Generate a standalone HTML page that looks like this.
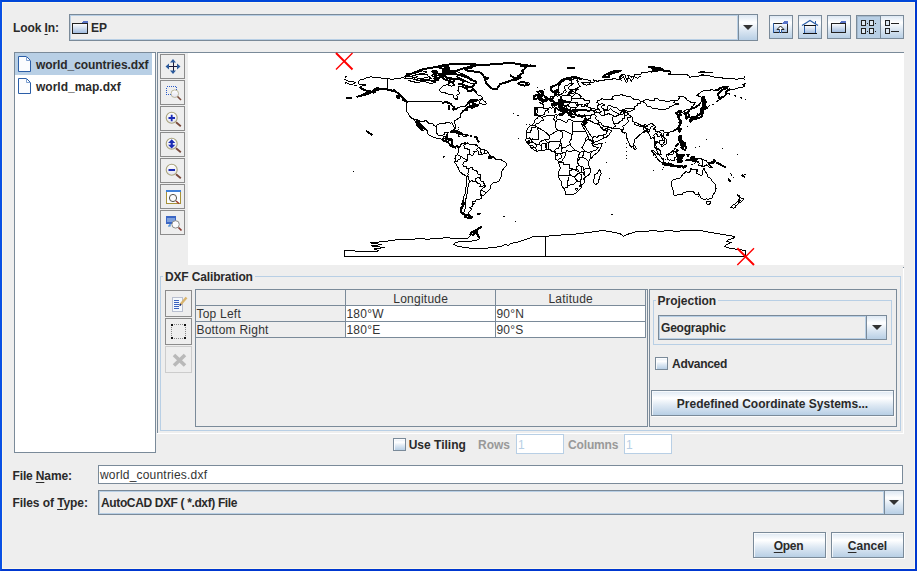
<!DOCTYPE html>
<html>
<head>
<meta charset="utf-8">
<title>Open DXF</title>
<style>
*{box-sizing:border-box;margin:0;padding:0}
html,body{width:917px;height:571px;overflow:hidden;background:#eee}
body{position:relative;font-family:"Liberation Sans",sans-serif;font-size:12px;color:#333;line-height:14px}
.a{position:absolute}
.b{font-weight:bold}
.frame{left:0;top:0;width:917px;height:571px;border:2px solid #0038d0;border-top-color:#0046d8;border-left-color:#0a50e4}
.frame2{left:2px;top:2px;width:913px;height:567px;border:1px solid #fbf8e8}
.lbl{white-space:nowrap;font-weight:bold;color:#2a2a2a}
.dis{color:#999}
.bd{border:1px solid #7a8a99}
.btn{border:1px solid #7a8a99;background:linear-gradient(#dde8f3 0%,#fff 30%,#dde8f3 60%,#b8cfe5 100%);box-shadow:1px 1px 0 #fbfbfb,inset 1px 1px 0 rgba(255,255,255,.75)}
.tbtn{border:1px solid #7a8a99;background:linear-gradient(#dde8f3 0%,#fff 30%,#dde8f3 60%,#b8cfe5 100%)}
.combo{border:1px solid #7a8a99;background:#eee}
.cin{border:1px solid #b8cfe5}
.arrow{border-left:1px solid #7a8a99;background:linear-gradient(#dde8f3 0%,#fff 30%,#dde8f3 60%,#b8cfe5 100%)}
.tri{width:0;height:0;border-left:5px solid transparent;border-right:5px solid transparent;border-top:5px solid #333}
.chk{width:13px;height:13px;border:1px solid #7a8a99;background:linear-gradient(#e6eef7 0%,#fff 30%,#dde8f3 60%,#b8cfe5 100%);box-shadow:inset 1px 1px 0 rgba(255,255,255,.8)}
.tool{width:25px;height:25px;border:1px solid #8c8c8c;background:#eee;left:160px}
.cell{letter-spacing:.24px;height:16px;line-height:17px;white-space:nowrap;font-weight:normal;color:#333;padding-left:.4px}
u{text-decoration:underline;text-decoration-thickness:1px;text-underline-offset:2px}
</style>
</head>
<body>
<div class="a frame"></div>
<div class="a frame2"></div>

<!-- Look In row -->
<div class="a lbl" style="left:13px;top:21px;letter-spacing:-.1px">Look <u>I</u>n:</div>
<div class="a combo" style="left:69px;top:14px;width:689px;height:27px"></div>
<div class="a cin" style="left:70px;top:15px;width:668px;height:25px"></div>
<div class="a lbl" style="left:91px;top:21px">EP</div>
<div class="a arrow" style="left:738px;top:15px;width:19px;height:25px"></div>
<div class="a tri" style="left:743px;top:25px"></div>

<div class="a tbtn" id="b1" style="left:769px;top:15px;width:24px;height:24px"></div>
<div class="a tbtn" id="b2" style="left:798px;top:15px;width:24px;height:24px"></div>
<div class="a tbtn" id="b3" style="left:827px;top:15px;width:24px;height:24px"></div>
<div class="a tbtn" id="b4" style="left:856px;top:15px;width:25px;height:24px;background:#b8cfe5;box-shadow:inset 1px 1px 0 #a3b8cc"></div>
<div class="a tbtn" id="b5" style="left:880px;top:15px;width:24px;height:24px"></div>

<!-- File list -->
<div class="a bd" style="left:14px;top:52px;width:142px;height:401px;background:#fff"></div>
<div class="a" style="left:15px;top:53px;width:137px;height:22px;background:#b8cfe5"></div>
<div class="a lbl" style="left:36px;top:58px;letter-spacing:-.08px">world_countries.dxf</div>
<div class="a lbl" style="left:36px;top:80px">world_map.dxf</div>

<!-- Preview pane -->
<div class="a" style="left:157px;top:52px;width:747px;height:1px;background:#7a8a99"></div>
<div class="a" style="left:157px;top:52px;width:1px;height:381px;background:#7a8a99"></div>
<div class="a" style="left:188px;top:53px;width:716px;height:212px;background:#fff"></div>
<div class="a" style="left:157px;top:433px;width:747px;height:1px;background:#fff"></div>
<div class="a" style="left:903px;top:268px;width:1px;height:165px;background:#fff"></div>
<div class="a" style="left:903px;top:267px;width:1px;height:1px;background:#7a8a99"></div>

<div class="a tool" style="top:54px"></div>
<div class="a tool" style="top:80px"></div>
<div class="a tool" style="top:106px"></div>
<div class="a tool" style="top:132px"></div>
<div class="a tool" style="top:158px"></div>
<div class="a tool" style="top:184px"></div>
<div class="a tool" style="top:210px"></div>

<!-- DXF Calibration -->
<div class="a" style="left:160px;top:276px;width:741px;height:155px;border:1px solid #b8cfe5"></div>
<div class="a lbl" style="left:163px;top:270px;background:#eee;padding:0 2px;letter-spacing:-.15px">DXF Calibration</div>

<div class="a tool" style="left:165px;top:290px;width:27px;height:27px"></div>
<div class="a tool" style="left:165px;top:318px;width:27px;height:27px"></div>
<div class="a tool" style="left:165px;top:346px;width:27px;height:27px;border-color:#ccc"></div>

<div class="a bd" style="left:195px;top:289px;width:453px;height:138px"></div>
<div class="a" id="tbl" style="left:196px;top:290px;width:451px;height:48px">
<div class="a" style="left:0;top:0;width:450px;height:48px;background:linear-gradient(#eee,#eee)"></div>
<div class="a" style="left:150px;top:16px;width:300px;height:32px;background:#fff"></div>
<div class="a" style="left:0;top:15px;width:450px;height:1px;background:#7a8a99"></div>
<div class="a" style="left:0;top:31px;width:450px;height:1px;background:#7a8a99"></div>
<div class="a" style="left:0;top:47px;width:450px;height:1px;background:#7a8a99"></div>
<div class="a" style="left:149px;top:0;width:1px;height:48px;background:#7a8a99"></div>
<div class="a" style="left:299px;top:0;width:1px;height:48px;background:#7a8a99"></div>
<div class="a" style="left:449px;top:0;width:1px;height:48px;background:#7a8a99"></div>
<div class="a cell" style="left:150px;top:1px;width:149px;text-align:center">Longitude</div>
<div class="a cell" style="left:300px;top:1px;width:149px;text-align:center">Latitude</div>
<div class="a cell" style="left:0;top:16px">Top Left</div>
<div class="a cell" style="left:150px;top:16px">180°W</div>
<div class="a cell" style="left:300px;top:16px">90°N</div>
<div class="a cell" style="left:0;top:32px">Bottom Right</div>
<div class="a cell" style="left:150px;top:32px">180°E</div>
<div class="a cell" style="left:300px;top:32px">90°S</div>
</div>

<!-- Projection -->
<div class="a bd" style="left:649px;top:289px;width:248px;height:138px"></div>
<div class="a" style="left:653px;top:300px;width:239px;height:45px;border:1px solid #b8cfe5"></div>
<div class="a lbl" style="left:655.5px;top:294px;background:#eee;padding:0 2px">Projection</div>
<div class="a combo" style="left:658px;top:315px;width:229px;height:25px"></div>
<div class="a cin" style="left:659px;top:316px;width:207px;height:23px"></div>
<div class="a lbl" style="left:661px;top:321px;letter-spacing:-.2px">Geographic</div>
<div class="a arrow" style="left:866px;top:316px;width:20px;height:23px"></div>
<div class="a tri" style="left:872px;top:325px"></div>
<div class="a chk" style="left:655px;top:357px"></div>
<div class="a lbl" style="left:672px;top:357px;letter-spacing:-.29px">Advanced</div>
<div class="a btn" style="left:651px;top:390px;width:243px;height:26px"></div>
<div class="a lbl" style="left:651px;top:397px;width:243px;text-align:center">Predefined Coordinate Systems...</div>

<!-- Tiling row -->
<div class="a chk" style="left:393px;top:438px"></div>
<div class="a lbl" style="left:408.7px;top:438px">Use Tiling</div>
<div class="a lbl dis" style="left:478px;top:438px">Rows</div>
<div class="a" style="left:516px;top:434px;width:48px;height:20px;background:#fff;border:1px solid #b8cfe5"></div>
<div class="a" style="left:518px;top:438px;color:#b8cfe5">1</div>
<div class="a lbl dis" style="left:568px;top:438px;letter-spacing:-.15px">Columns</div>
<div class="a" style="left:624px;top:434px;width:48px;height:20px;background:#fff;border:1px solid #b8cfe5"></div>
<div class="a" style="left:626px;top:438px;color:#b8cfe5">1</div>

<!-- File name / type -->
<div class="a lbl" style="left:12.5px;top:469px;letter-spacing:-.14px">File <u>N</u>ame:</div>
<div class="a bd" style="left:98px;top:465px;width:805px;height:19px;background:#fff"></div>
<div class="a" style="left:100px;top:468px;white-space:nowrap;letter-spacing:.2px">world_countries.dxf</div>
<div class="a lbl" style="left:12.5px;top:496px;letter-spacing:-.08px">Files of <u>T</u>ype:</div>
<div class="a combo" style="left:98px;top:490px;width:806px;height:25px"></div>
<div class="a cin" style="left:99px;top:491px;width:785px;height:23px"></div>
<div class="a lbl" style="left:101px;top:496px;letter-spacing:-.37px">AutoCAD DXF ( *.dxf) File</div>
<div class="a arrow" style="left:884px;top:491px;width:19px;height:23px"></div>
<div class="a tri" style="left:889px;top:500px"></div>

<!-- Buttons -->
<div class="a btn" style="left:753px;top:532px;width:73px;height:26px"></div>
<div class="a lbl" style="left:752px;top:539px;width:73px;text-align:center;letter-spacing:-.3px"><u>O</u>pen</div>
<div class="a btn" style="left:831px;top:532px;width:73px;height:26px"></div>
<div class="a lbl" style="left:831px;top:539px;width:73px;text-align:center"><u>C</u>ancel</div>

<!-- Map + icons SVG overlay -->
<svg class="a" id="ov" style="left:0;top:0" width="917" height="571" viewBox="0 0 917 571">

<defs>
<linearGradient id="fg" x1="0" y1="0" x2="0" y2="1"><stop offset="0" stop-color="#fff"/><stop offset="1" stop-color="#9db9de"/></linearGradient>
<linearGradient id="lens" x1="0" y1="0" x2="0" y2="1"><stop offset="0" stop-color="#fff"/><stop offset="1" stop-color="#e4e4ee"/></linearGradient>
</defs>
<g id="icons" shape-rendering="crispEdges">
<!-- combo folder -->
<rect x="72.5" y="23.5" width="15" height="10" fill="url(#fg)" stroke="#222"/>
<path d="M81 23 L83 21 H88 V23 Z" fill="#5873c9"/>
<!-- file icons -->
<path d="M18.5 56.5 H26.5 L30.5 60.5 V71.5 H18.5 Z" fill="#fbfcfe" stroke="#2b5ea7" shape-rendering="auto"/>
<path d="M26.5 56.5 V60.5 H30.5" fill="none" stroke="#7d9fd0" shape-rendering="auto"/>
<path d="M18.5 78.5 H26.5 L30.5 82.5 V93.5 H18.5 Z" fill="#fbfcfe" stroke="#2b5ea7" shape-rendering="auto"/>
<path d="M26.5 78.5 V82.5 H30.5" fill="none" stroke="#7d9fd0" shape-rendering="auto"/>
<!-- up folder -->
<rect x="773.5" y="23.5" width="14" height="9" fill="url(#fg)" stroke="#222"/>
<path d="M773.5 23 V33" stroke="#2b5ea7"/>
<path d="M782 23 L784 21 H788 V24 H782 Z" fill="#5873c9"/>
<path d="M780.5 26 L777 29.5 H779.5 V32.5 H781.5 V29.5 H784 Z" fill="#fff" stroke="#222" shape-rendering="auto" stroke-width="1"/>
<path d="M779.5 30 V32.5 M781.5 30 V32.5" stroke="#2b5ea7"/>
<!-- home -->
<path d="M802 25.5 L810 20.5 L818 25.5" fill="none" stroke="#2b5ea7" shape-rendering="auto" stroke-width="1.2"/>
<path d="M815.5 21 V24" stroke="#2b5ea7" stroke-width="1.5"/>
<rect x="804.5" y="25.5" width="11" height="8" fill="url(#fg)" stroke="#2b5ea7"/>
<path d="M804 25.5 H816 M803 33.5 H817" stroke="#111"/>
<!-- new folder -->
<rect x="831.5" y="23.5" width="14" height="9" fill="url(#fg)" stroke="#222"/>
<path d="M839 23 L841 21 H846 V23 Z" fill="#5873c9"/>
<!-- list view -->
<g fill="#dde8f3" stroke="#222">
<rect x="861.5" y="20.5" width="4" height="5"/><rect x="869.5" y="20.5" width="4" height="5"/>
<rect x="861.5" y="28.5" width="4" height="5"/><rect x="869.5" y="28.5" width="4" height="5"/>
<rect x="885.5" y="20.5" width="4" height="5"/><rect x="885.5" y="28.5" width="4" height="5"/>
</g>
<g fill="#222"><rect x="867" y="23" width="1" height="1"/><rect x="875" y="23" width="1" height="1"/><rect x="867" y="31" width="1" height="1"/><rect x="875" y="31" width="1" height="1"/>
<rect x="891" y="23" width="8" height="1"/><rect x="891" y="31" width="8" height="1"/></g>
</g>
<g id="tools">
<!-- move -->
<path d="M173 60 V73 M166.5 66.5 H179.5" stroke="#1a1a3a" stroke-width="1" shape-rendering="crispEdges"/>
<path d="M173 59 L176 62.5 H170 Z M173 74 L176 70.5 H170 Z M165.5 66.5 L169 63.5 V69.5 Z M180.5 66.5 L177 63.5 V69.5 Z" fill="#2b5a9c"/>
<!-- zoom box -->
<rect x="166.5" y="86.5" width="10" height="8" fill="none" stroke="#2a5ac8" stroke-dasharray="1 1" shape-rendering="crispEdges"/>
<circle cx="174.8" cy="93.7" r="3.8" fill="url(#lens)" stroke="#bdb9a0" stroke-width="1"/>
<path d="M177.5 96.5 L181 100" stroke="#7a4a3c" stroke-width="1.6"/>
<!-- zoom in -->
<circle cx="171.7" cy="117.8" r="5.5" fill="url(#lens)" stroke="#aaa47e" stroke-width="1.1"/>
<path d="M168.5 118 H175 M171.7 114.8 V121.2" stroke="#1c2cb4" stroke-width="1.8"/>
<path d="M176 122.3 L180.8 126.3" stroke="#7a4a3c" stroke-width="1.8"/>
<!-- zoom both -->
<circle cx="171.7" cy="143.8" r="5.5" fill="url(#lens)" stroke="#aaa47e" stroke-width="1.1"/>
<path d="M171.7 139.2 L175.3 143 H172.8 V144.8 H175.3 L171.7 148.6 L168.1 144.8 H170.6 V143 H168.1 Z" fill="#1c2cb4"/>
<path d="M176 148.3 L180.8 152.3" stroke="#7a4a3c" stroke-width="1.8"/>
<!-- zoom out -->
<circle cx="171.7" cy="169.8" r="5.5" fill="url(#lens)" stroke="#aaa47e" stroke-width="1.1"/>
<path d="M168.5 170 H175" stroke="#1c2cb4" stroke-width="2"/>
<path d="M176 174.3 L180.8 178.3" stroke="#7a4a3c" stroke-width="1.8"/>
<!-- zoom window -->
<rect x="166.5" y="190.5" width="14" height="13" fill="#fbfdff" stroke="#a89238" shape-rendering="crispEdges"/>
<rect x="166" y="190" width="15" height="2" fill="#3f80d8" shape-rendering="crispEdges"/>
<circle cx="173" cy="198" r="3.6" fill="#fafafa" stroke="#55524a" stroke-width="1"/>
<path d="M176 201 L179 203.5" stroke="#a03828" stroke-width="1.5"/>
<!-- zoom screen -->
<rect x="166" y="216" width="10" height="8" fill="#3b66c4" shape-rendering="crispEdges"/>
<rect x="167" y="218" width="8" height="4" fill="#7d9fdc" shape-rendering="crispEdges"/>
<path d="M170 224 V226 H168 " stroke="#2f7bd0" stroke-width="1.2" fill="none"/>
<circle cx="175.6" cy="224.4" r="3.7" fill="#fbfbfd" stroke="#8c8c88" stroke-width="1"/>
<path d="M178.5 227.5 L181.5 230.5" stroke="#8a3a30" stroke-width="1.7"/>
<!-- edit -->
<rect x="172.5" y="297.5" width="10" height="14" fill="#f4f8fc" stroke="#b9bfd0" shape-rendering="crispEdges"/>
<path d="M174 300.5 H179 M174 302.5 H179 M174 304.5 H179 M174 306.5 H179 M174 308.5 H179" stroke="#3b62c0" shape-rendering="crispEdges"/>
<path d="M186.5 297.5 L180.5 304.5" stroke="#d9b36c" stroke-width="2.4"/>
<path d="M180.8 304 L179.8 305.6" stroke="#1a2a6a" stroke-width="1.6"/>
<!-- select -->
<g fill="#111" shape-rendering="crispEdges"><rect x="171" y="324" width="2" height="2"/><rect x="184" y="324" width="2" height="2"/><rect x="171" y="337" width="2" height="2"/><rect x="184" y="337" width="2" height="2"/></g>
<path d="M174 324.5 H184 M174 338.5 H184 M171.5 327 V337 M185.5 327 V337" stroke="#888" stroke-dasharray="1 1" shape-rendering="crispEdges"/>
<!-- delete disabled -->
<path d="M174 355 L185 365.5 M185 355 L174 365.5" stroke="#b9b9b9" stroke-width="3.6" stroke-linecap="butt"/>
</g>
<!--MAP--><g id="map" fill="none" stroke="#000" shape-rendering="crispEdges" stroke-linejoin="round"><path stroke-width="1" d="M465.1,134.3 465.1,136.2 M387.9,78.7 387.9,89.1 390.2,89.4 391.8,90.5 394.1,89.8 395.7,90.8 398.0,92.8 400.2,93.9 400.2,95.0 M408.2,101.7 439.0,101.7 439.4,101.2 442.5,102.2 445.3,102.8 446.4,102.5 450.9,104.5 452.0,105.0 453.1,105.8 453.2,108.4 452.6,109.2 453.1,109.8 457.0,108.6 457.0,108.0 459.8,107.2 461.5,106.1 465.4,106.1 466.5,105.6 467.0,104.5 467.9,103.5 469.3,103.6 469.5,105.2 470.4,106.1 M414.6,120.1 417.2,119.8 421.4,121.4 424.5,121.4 424.5,120.8 426.4,120.8 428.6,123.2 430.3,124.0 430.8,123.1 432.5,123.4 434.2,125.6 436.6,127.3 M442.3,140.1 442.3,139.2 442.9,138.3 444.3,138.3 443.2,137.1 443.6,136.4 445.7,136.4 445.7,138.5 446.0,138.5 M445.7,136.4 446.7,135.7 M446.8,138.8 445.5,140.2 444.6,140.9 M445.5,140.2 447.0,140.8 447.2,141.3 M447.8,141.8 448.4,140.9 450.3,140.1 452.3,139.6 M449.6,143.9 451.4,144.2 451.8,144.1 M452.7,147.2 453.0,145.6 M468.6,214.9 468.6,217.4 M443.3,156.6 443.9,157.3 M444.2,156.8 444.6,157.0 M465.6,143.1 464.3,144.0 463.7,145.7 464.4,146.9 464.8,148.2 467.0,148.5 467.7,149.5 469.8,149.4 469.5,151.2 470.0,152.4 469.5,153.1 470.5,154.9 M470.5,154.9 469.8,154.0 467.3,154.4 467.3,155.0 467.8,155.1 467.6,156.8 467.0,156.5 467.1,160.9 M467.1,160.9 466.3,160.5 467.0,159.3 464.3,158.9 462.6,157.4 461.2,156.4 M461.2,156.4 459.8,155.9 458.7,155.5 457.2,154.6 M461.2,156.4 460.9,157.9 459.8,159.2 458.1,159.8 457.6,161.3 456.5,161.8 455.6,161.1 455.6,160.0 M467.1,160.9 463.9,161.9 462.8,164.3 463.9,166.5 466.5,166.8 466.4,168.5 467.5,168.5 M467.5,168.5 468.5,170.2 468.2,172.4 467.7,173.5 468.2,174.3 467.6,175.8 466.6,176.8 M467.6,175.8 468.7,178.0 469.0,180.2 470.2,181.7 M467.5,168.5 469.3,168.2 472.3,167.2 472.3,169.3 474.8,170.3 477.6,171.5 478.0,174.3 480.1,174.4 480.7,176.3 480.6,177.6 480.2,178.7 M480.2,178.7 479.3,177.8 476.3,178.1 475.6,179.1 475.3,181.0 473.4,181.7 472.4,180.9 471.2,180.5 470.2,181.7 M470.2,181.7 468.8,183.6 468.7,185.8 467.4,188.0 467.0,190.8 467.0,193.6 466.5,196.4 465.9,199.1 465.1,201.9 465.1,205.3 465.4,208.1 464.3,210.8 463.7,212.5 464.8,214.2 468.8,214.5 M475.3,181.0 477.1,182.8 480.9,184.4 479.7,186.7 482.6,186.7 484.2,184.8 M480.2,178.7 480.5,180.9 483.0,181.2 483.3,183.0 484.5,183.1 484.2,184.8 M484.2,184.8 485.1,185.4 485.2,186.6 482.9,187.9 480.9,189.9 480.2,192.5 480.0,194.0 M480.9,189.9 482.6,190.7 484.9,191.8 485.8,192.7 485.5,193.8 M470.5,154.9 472.1,155.4 473.7,154.4 473.7,153.5 474.8,152.0 473.2,151.7 475.1,152.0 477.1,151.2 477.4,150.5 M477.4,150.5 476.7,149.6 477.8,148.5 478.4,147.0 M477.4,150.5 478.2,151.2 478.6,151.9 478.3,153.6 479.3,154.8 480.4,154.6 482.1,154.1 M482.1,154.1 480.4,151.8 481.3,149.6 M482.1,154.1 484.2,153.7 484.9,153.8 M484.9,153.8 484.4,151.8 484.9,149.8 M484.9,153.8 486.5,153.8 487.5,151.6 M536.1,95.5 536.9,96.0 538.0,96.0 M541.5,90.5 541.9,90.3 M571.2,113.0 572.3,113.8 M576.2,115.7 576.0,116.3 M574.0,112.6 574.5,112.8 M579.3,78.5 577.3,79.4 M577.3,79.4 576.2,78.3 574.0,78.6 573.4,79.4 568.4,79.2 567.9,79.4 M567.9,79.4 565.1,80.0 563.4,81.1 561.2,82.7 560.6,84.4 558.6,85.5 558.6,87.7 558.9,88.9 558.1,89.8 557.5,90.5 M567.9,79.4 571.2,80.7 571.8,82.2 572.0,83.0 M577.3,79.4 576.8,80.3 578.4,81.1 577.3,81.8 578.4,83.3 578.1,84.4 580.1,86.3 577.3,88.1 576.0,88.9 M576.2,90.1 575.5,91.1 575.7,92.2 M572.1,91.9 574.0,92.0 575.7,92.2 M575.7,92.2 576.4,93.7 574.7,94.2 M568.5,93.9 571.8,93.5 574.7,94.2 M574.7,94.2 573.6,95.9 571.2,96.2 M568.4,94.7 570.4,95.1 570.4,95.7 M567.0,95.7 570.4,95.7 571.2,96.2 M571.2,96.2 571.6,97.6 571.3,98.9 M571.3,98.9 571.8,100.0 570.3,101.5 570.1,101.6 M570.1,101.6 567.3,101.3 566.0,101.1 M566.0,101.1 564.0,100.2 562.8,99.9 561.5,99.6 M561.5,99.6 561.4,98.3 560.8,97.2 561.0,96.2 M561.5,99.6 559.5,100.1 558.6,100.3 559.3,101.3 560.4,102.1 M560.4,102.1 559.5,103.3 556.7,103.3 555.7,103.3 M560.4,102.1 561.7,101.7 563.8,102.1 M563.8,102.1 565.3,101.3 566.0,101.1 M563.8,102.1 564.1,102.8 566.0,103.0 567.3,102.6 569.8,102.3 M569.8,102.3 570.1,101.6 M564.1,102.8 563.4,103.9 563.0,104.0 M563.0,104.0 563.4,104.5 564.5,105.1 566.1,105.1 M566.1,105.1 567.6,104.9 M567.6,104.9 569.0,103.9 570.5,102.8 M569.8,102.3 570.5,102.8 M570.5,102.8 572.3,102.9 574.7,102.5 M574.7,102.5 576.3,104.5 576.4,105.6 M574.7,102.5 577.3,102.8 578.4,104.5 576.4,105.6 M576.4,105.6 578.0,105.9 M576.9,107.6 575.1,107.1 570.3,107.0 M570.3,107.0 568.9,106.4 567.6,104.9 M570.3,107.0 570.0,108.4 570.0,109.1 M570.0,109.1 570.6,110.3 M570.6,110.3 572.3,110.0 574.3,109.8 M574.3,109.8 576.2,109.5 M574.3,109.8 574.0,110.7 M570.6,110.3 568.4,110.7 M568.4,110.7 567.3,112.0 M568.4,110.7 567.9,109.6 M567.9,109.6 567.3,108.8 566.6,109.6 M567.9,109.6 570.0,109.1 M566.2,106.2 566.6,107.0 566.4,107.8 565.6,108.9 M562.6,105.9 563.4,105.9 566.2,106.2 M562.6,105.9 563.1,107.0 564.6,108.4 565.6,108.9 M566.2,106.2 566.1,105.1 M560.2,105.6 562.1,105.6 563.4,104.5 M560.3,104.5 563.0,104.0 M560.3,104.5 560.2,105.4 M560.3,104.5 558.6,103.9 556.7,104.0 M556.7,104.0 556.2,104.7 555.0,105.0 554.4,104.6 552.8,105.1 M556.7,104.0 555.7,103.3 M555.7,103.3 554.5,103.1 553.5,103.2 M553.5,103.2 552.6,103.6 551.7,104.7 552.8,105.1 M552.8,105.1 552.5,106.1 553.4,107.5 M553.5,103.2 554.2,101.7 552.1,101.1 M552.1,101.1 551.5,101.1 550.4,100.6 549.7,100.7 548.4,99.8 547.8,99.3 M552.1,101.1 551.8,100.4 551.5,101.1 M551.8,100.4 551.7,99.7 M551.7,99.7 551.4,99.2 549.8,99.0 548.8,99.0 M551.7,99.7 551.8,98.6 552.8,98.0 552.8,96.8 M554.7,95.1 555.6,95.2 M535.2,109.6 537.8,109.7 537.4,110.6 537.2,112.0 536.9,113.4 536.8,114.8 M543.1,107.9 545.8,108.7 548.6,109.0 M571.3,98.9 575.1,98.8 579.0,99.0 580.4,98.2 M576.4,93.7 579.3,94.3 579.6,95.3 581.2,96.5 580.4,98.2 M580.4,98.2 582.9,98.0 584.6,100.1 587.4,100.7 589.6,101.0 589.4,102.8 587.6,103.8 M589.6,107.9 592.9,108.1 596.8,109.7 M596.8,109.7 599.0,109.7 M591.4,110.0 593.5,110.5 M593.5,110.5 595.2,110.3 M595.2,110.3 596.8,109.7 M593.5,110.5 593.7,111.6 594.9,112.0 M595.2,110.3 596.3,111.5 596.8,112.9 M594.9,112.0 596.8,112.9 M594.9,112.0 594.4,113.9 594.9,114.8 M527.5,125.1 527.9,125.0 M588.8,162.9 589.0,163.4 M554.6,152.1 554.8,152.6 M573.1,121.1 572.9,123.7 572.9,131.8 M572.9,131.8 586.1,131.8 M572.9,131.8 572.9,134.0 571.8,134.0 571.8,134.5 M571.8,134.5 562.8,130.1 561.7,130.6 M561.7,130.6 560.8,131.1 558.4,130.1 M558.4,130.1 556.2,129.0 555.6,126.7 555.9,124.5 555.6,122.6 M555.6,122.6 556.5,120.9 557.8,119.3 M555.6,122.6 555.0,120.6 553.4,118.9 554.3,117.3 554.6,115.2 M542.6,117.2 543.1,118.9 543.6,120.4 541.1,120.9 539.5,122.8 535.3,124.3 535.3,125.8 M530.3,125.4 535.3,125.4 M535.3,125.8 535.3,127.3 531.7,127.3 531.7,130.1 530.5,130.6 530.5,132.5 526.1,132.4 M535.3,125.8 539.7,128.4 M539.7,128.4 546.4,132.8 548.7,135.1 549.7,135.0 M549.7,135.0 551.7,134.2 558.4,130.1 M539.7,128.4 537.8,128.4 538.9,139.0 534.7,139.0 532.9,139.4 532.2,138.9 531.4,139.8 M549.7,135.0 549.7,137.9 548.9,139.1 546.1,139.6 545.2,139.6 M545.2,139.6 542.8,140.4 540.6,141.4 539.1,143.2 538.9,144.7 M538.9,144.7 536.1,144.9 M536.1,144.9 535.6,143.4 533.3,142.9 532.3,142.4 M532.3,142.4 531.4,139.8 M531.4,139.8 529.4,137.9 526.6,138.4 M532.3,142.4 529.8,142.1 M529.8,142.1 526.4,142.4 M526.3,141.1 529.4,140.9 529.6,141.4 526.3,141.7 M529.8,142.1 529.8,143.2 528.3,144.0 M530.2,146.2 532.2,145.1 533.2,146.2 533.5,146.8 M533.5,146.8 532.2,148.6 M533.5,146.8 534.7,147.9 535.6,147.8 M535.6,147.8 536.4,146.8 536.1,144.9 M535.6,147.8 536.7,150.1 536.7,151.4 M538.9,144.7 541.9,145.6 M541.9,145.6 541.5,149.0 541.6,150.6 M541.9,145.6 541.9,144.0 545.0,143.9 M545.0,143.9 545.6,146.8 546.4,149.5 M545.9,144.0 546.8,146.2 546.9,149.2 M545.0,143.9 546.0,144.0 M546.0,144.0 547.5,142.4 M547.5,142.4 549.0,143.2 M549.0,143.2 548.1,146.2 548.0,149.1 M545.2,139.6 546.1,141.4 547.5,142.4 M549.0,143.2 549.5,141.2 552.8,141.8 556.2,141.4 560.2,141.0 M560.2,141.0 560.1,140.1 562.3,137.5 562.3,134.0 561.7,130.6 M560.2,141.0 560.8,142.3 M560.8,142.3 559.7,145.1 558.2,148.5 556.2,148.7 554.5,151.0 M560.8,142.3 561.7,145.1 560.6,145.1 562.3,147.9 M562.3,147.9 561.2,150.1 562.8,153.8 M562.8,153.8 559.8,153.8 557.6,153.8 555.9,153.7 M557.6,153.8 557.6,155.1 555.6,155.1 M559.8,153.8 561.1,154.8 561.1,157.9 559.2,158.7 558.2,159.6 557.4,160.6 M562.8,153.8 563.4,152.5 565.7,152.4 M565.7,152.4 564.8,156.8 562.8,159.6 562.1,161.1 560.1,161.8 558.9,161.8 M558.6,162.7 559.5,161.5 M558.7,162.9 563.4,162.8 564.0,164.6 566.7,164.6 567.3,164.1 569.3,164.4 569.4,166.8 569.9,168.7 571.6,168.4 571.8,170.7 M571.8,170.7 569.5,170.7 569.5,174.1 571.1,175.9 M558.2,175.5 560.6,175.6 565.6,175.6 571.1,175.9 573.2,176.1 M567.3,183.9 567.3,187.9 563.4,188.1 M567.3,183.9 568.2,186.1 570.6,184.4 573.4,184.9 575.1,182.7 577.8,181.0 M577.8,181.0 575.7,179.1 573.2,176.1 M577.8,181.0 579.9,181.2 M579.9,181.2 581.6,178.5 581.8,175.2 578.9,173.6 M573.2,176.1 575.1,176.2 577.2,174.1 578.9,173.6 M579.9,181.2 580.7,183.6 580.7,185.2 M580.8,186.1 581.7,186.2 M571.8,168.8 573.2,169.2 575.0,169.5 575.4,169.9 577.3,171.2 578.2,171.2 578.2,169.9 576.7,169.4 576.8,166.6 579.3,165.5 M579.3,165.5 581.7,166.7 M581.7,166.7 582.0,170.2 581.4,171.4 582.0,171.9 M582.0,171.9 578.7,173.0 578.9,173.6 M581.7,166.7 582.9,166.8 583.6,169.1 M583.6,169.1 584.0,171.3 584.9,173.0 584.3,175.2 583.2,174.1 583.5,172.4 582.0,171.9 M583.6,169.1 587.4,168.8 590.0,168.0 M588.7,161.5 586.9,159.6 582.9,157.4 M582.9,157.4 579.0,157.4 M579.0,157.4 579.3,158.9 579.0,160.2 577.8,161.2 M578.0,157.8 579.0,157.4 M577.3,159.3 579.3,158.9 M578.0,157.8 577.3,159.3 M577.3,159.3 577.8,161.2 M577.8,161.2 578.0,163.5 579.3,165.5 M578.0,157.8 578.1,155.7 579.6,153.8 579.3,152.4 M582.9,157.4 582.9,155.7 584.0,154.3 583.3,152.1 582.9,151.6 M579.3,152.4 582.9,151.6 M582.9,151.6 585.0,151.1 M585.0,151.1 587.4,152.2 589.0,152.5 590.7,151.8 591.7,151.9 M591.7,151.9 590.7,153.1 590.7,157.2 591.3,158.2 M591.7,151.9 593.5,150.9 595.2,150.7 598.5,147.3 597.4,147.3 594.0,146.3 592.9,145.7 592.7,144.1 593.1,143.4 M592.7,144.1 591.6,143.4 592.3,142.3 M592.3,142.3 593.0,142.1 M592.3,142.3 589.6,140.1 587.4,139.9 585.7,140.3 M585.7,140.3 586.2,137.3 588.0,136.2 M585.7,140.3 585.1,142.1 584.0,144.0 583.1,145.1 582.9,146.8 581.8,147.3 582.7,148.5 585.0,151.1 M571.8,134.5 571.8,138.8 570.1,140.7 569.5,142.1 570.5,144.1 M570.5,144.1 571.2,146.2 572.9,147.9 575.5,150.6 M575.5,150.6 577.9,151.4 579.3,152.4 M562.3,147.9 565.6,147.3 566.7,146.2 570.5,144.1 M565.7,152.4 566.7,150.7 570.1,151.7 572.9,150.7 575.5,150.6 M583.1,121.4 583.9,123.4 M584.0,123.4 584.6,121.2 584.7,119.8 M584.1,119.4 584.9,119.2 M585.0,117.7 585.8,118.2 584.9,119.2 M584.8,119.8 586.0,120.3 588.2,119.1 M588.2,119.1 590.7,117.9 591.0,115.6 592.3,114.9 M585.2,116.2 585.9,115.3 587.4,115.3 589.6,115.3 592.3,114.9 M592.3,114.9 594.9,114.8 M594.9,114.8 596.3,116.4 595.7,117.8 596.3,119.5 598.3,120.8 599.0,122.8 M598.5,122.8 597.4,124.0 596.8,123.8 M596.8,123.8 597.9,124.4 598.9,124.5 M596.8,123.8 594.8,123.7 591.8,121.6 590.0,120.7 588.7,120.5 M588.7,120.5 588.2,119.1 M588.7,120.5 586.2,121.2 587.4,122.3 586.8,122.8 585.1,123.7 584.0,123.6 584.0,123.4 M592.7,138.0 593.5,136.9 595.2,136.9 597.4,137.3 598.5,136.0 602.9,135.1 M602.9,135.1 604.2,137.8 M602.9,135.1 606.3,134.0 607.1,131.8 M607.1,131.8 606.5,131.0 603.6,130.7 602.5,129.3 M607.1,131.8 607.4,129.5 607.7,128.4 M601.6,128.6 602.5,128.9 M743.9,77.2 745.5,76.6 M745.5,77.3 743.9,77.2 M596.8,112.9 598.5,112.1 599.5,113.5 M599.6,104.5 597.4,102.2 596.8,102.2 597.4,100.6 599.0,100.6 601.8,98.9 606.3,99.4 610.2,99.4 613.5,99.4 611.9,98.3 613.0,96.1 617.4,95.5 621.9,94.7 624.1,95.9 626.9,96.1 630.8,96.9 634.1,99.4 638.0,99.4 640.3,101.0 642.3,101.6 M603.5,109.7 605.2,109.1 606.8,110.3 607.4,110.3 M607.4,110.3 607.4,106.1 610.3,105.5 613.0,106.8 614.1,107.8 616.9,107.7 618.5,109.5 619.1,110.4 620.8,110.6 621.9,110.1 623.6,109.4 624.1,109.1 M624.1,109.1 626.9,108.9 627.5,108.1 629.7,108.5 633.6,108.9 634.4,109.2 M634.4,109.2 634.7,108.4 635.0,106.1 636.9,105.9 637.5,103.7 640.5,103.6 640.5,102.3 642.3,101.6 M642.3,101.6 642.8,101.5 645.3,100.0 648.1,99.7 650.9,100.6 654.2,100.6 654.7,98.3 658.9,99.1 659.0,100.0 664.2,100.9 665.9,101.3 669.8,101.2 672.6,100.3 675.0,100.8 M642.8,101.5 643.1,102.2 645.8,103.3 646.4,105.9 651.4,107.0 652.4,108.7 657.5,108.9 662.0,109.9 667.0,108.9 669.8,107.6 669.7,106.1 672.0,106.1 674.2,104.7 678.4,104.3 678.6,103.9 676.2,103.2 673.8,102.9 675.0,100.8 M675.0,100.8 676.2,101.1 677.8,100.2 679.6,97.7 678.7,96.9 682.6,96.7 685.4,97.4 687.1,100.3 690.4,101.8 691.0,103.1 695.1,102.3 693.4,105.9 691.2,106.4 691.0,108.4 690.6,109.1 M690.6,109.1 687.6,109.5 686.3,109.8 683.6,111.7 M686.2,114.2 688.1,113.3 M605.1,114.7 608.5,113.7 611.1,114.5 613.2,115.5 613.2,116.6 M607.4,110.3 608.5,110.3 610.2,108.7 611.9,109.2 612.1,110.3 614.1,111.7 616.8,112.9 619.2,114.6 M613.2,116.6 615.2,116.8 616.9,115.8 619.2,114.6 M619.2,114.6 620.5,114.8 M620.5,114.8 621.0,113.4 620.2,112.5 621.4,112.1 622.2,110.9 623.6,110.6 624.9,110.1 626.5,110.8 625.2,111.3 624.0,111.5 622.4,111.7 623.6,112.1 627.2,112.3 M627.2,112.3 628.6,114.6 M620.5,114.8 622.4,114.8 623.3,113.9 624.7,113.4 624.7,115.3 628.0,114.8 628.6,114.6 M628.0,114.8 624.9,115.7 624.3,118.2 622.4,118.9 622.2,120.8 619.3,121.5 618.9,123.0 614.6,123.5 612.9,123.1 M613.2,116.6 612.5,118.0 612.9,121.2 613.9,121.7 612.9,123.1 M612.9,123.1 615.0,124.8 615.5,126.1 613.9,127.1 613.6,128.2 M634.4,109.2 631.9,110.6 629.7,111.3 627.5,111.7 627.2,112.3 M628.6,114.6 629.7,115.6 631.7,116.7 M631.7,116.7 633.0,118.0 632.8,120.1 633.0,121.7 635.3,122.6 M631.7,116.7 629.7,117.7 627.5,117.6 627.2,119.5 628.9,120.3 628.0,121.7 627.3,122.8 625.2,125.1 623.6,125.1 622.4,126.4 623.3,127.6 624.1,129.0 621.7,129.3 621.0,129.9 M635.3,122.6 634.1,124.2 636.4,125.2 638.6,125.7 640.8,126.6 643.2,126.9 643.2,125.2 M635.3,122.6 636.4,122.5 638.6,124.1 640.8,125.1 643.2,125.2 M643.2,125.2 644.1,125.8 M647.5,125.4 649.7,124.0 652.0,123.5 653.4,124.8 M653.4,124.8 653.1,126.0 651.1,126.7 650.4,128.2 649.7,129.6 649.0,129.5 649.0,131.5 648.2,131.8 M648.2,131.8 648.0,133.2 M644.2,132.0 643.9,129.2 643.3,127.5 643.6,126.9 645.1,127.3 645.1,128.1 647.8,128.3 648.1,129.3 646.6,129.5 647.0,130.6 647.8,129.9 648.2,131.8 M653.4,124.8 655.0,125.6 655.0,127.5 653.7,128.6 653.7,129.6 655.2,129.4 655.9,130.7 655.5,131.5 657.7,132.0 M657.7,132.0 656.5,133.5 M656.5,133.5 654.2,134.2 653.9,135.7 654.7,137.3 654.9,138.4 654.4,139.3 655.5,141.8 656.0,143.1 655.1,144.6 654.7,145.1 M657.7,132.0 658.8,131.2 M658.8,131.2 660.3,131.0 662.3,130.3 663.9,130.7 663.8,131.9 665.4,132.3 M658.8,131.2 659.7,132.2 661.0,133.0 661.9,134.1 660.9,134.6 662.2,135.7 663.7,137.4 664.8,138.7 664.9,139.9 M656.5,133.5 657.0,134.5 657.8,134.5 657.5,136.5 658.6,136.2 660.9,135.9 661.8,137.9 662.7,138.9 662.2,140.3 M662.2,140.3 663.1,140.4 664.9,139.9 M662.2,140.3 659.8,140.3 659.2,141.2 659.7,143.3 M664.9,139.9 664.8,142.3 663.1,143.2 663.0,144.0 662.0,144.1 661.3,144.7 M656.8,149.1 657.6,149.9 658.8,149.4 M683.7,144.9 684.5,144.6 684.3,145.2 M667.1,154.0 668.1,155.3 669.8,154.6 672.6,154.7 674.0,151.5 676.0,151.6 M672.0,151.1 672.9,151.6 673.5,150.8 M684.2,166.5 684.4,167.3 M702.1,159.2 702.1,166.4 M697.1,171.6 697.4,172.1 M697.6,196.0 698.8,196.3 M715.7,184.1 715.8,184.9 M731.8,208.4 732.4,208.7 M731.4,174.3 731.9,174.6 M357.9,83.2 359.5,80.2 363.4,79.4 366.8,77.7 370.7,76.8 375.7,77.4 380.1,77.9 384.6,78.3 387.9,78.7 392.4,79.4 394.6,78.8 399.1,78.3 402.4,77.7 405.8,78.3 410.2,78.5 414.7,79.4 416.9,80.5 422.5,80.5 424.7,81.1 424.7,80.0 428.1,80.0 431.4,80.7 435.8,80.5 438.1,80.0 438.6,78.8 440.3,76.3 442.5,77.9 444.2,79.4 447.0,79.8 449.2,81.1 450.3,78.8 453.7,78.7 454.2,80.5 453.1,82.2 449.2,82.4 448.1,83.8 446.4,85.0 444.0,85.5 441.4,87.2 439.7,89.4 439.6,90.8 442.0,92.8 444.8,92.8 448.1,93.9 450.3,94.7 453.1,94.8 453.7,97.2 454.8,98.9 456.5,99.1 457.3,98.3 457.0,96.1 456.5,95.2 459.2,93.9 459.6,92.2 457.6,90.9 458.7,89.4 458.1,86.7 462.6,86.9 464.8,87.7 467.0,88.3 467.6,90.5 469.8,91.3 471.5,90.8 473.2,89.1 476.0,92.2 477.1,93.9 478.2,95.0 481.0,96.1 482.6,97.2 483.0,98.3 481.5,99.0 478.2,100.3 473.7,100.3 470.9,100.3 467.6,103.0 471.5,101.7 473.2,101.9 472.6,103.3 473.2,104.8 476.0,105.2 478.2,104.5 477.1,105.8 474.3,106.7 472.1,107.8 471.3,107.0 473.2,105.6 470.4,106.1 468.2,107.2 466.5,108.1 466.3,109.5 467.0,109.7 465.4,110.1 462.6,111.0 462.4,112.3 460.9,113.4 460.4,115.0 460.7,116.7 458.7,118.4 457.0,119.2 454.8,120.6 454.5,122.3 455.3,124.5 455.9,126.7 455.3,128.2 454.6,128.1 453.7,126.2 452.9,124.5 452.0,122.8 450.3,123.2 448.1,122.4 445.9,122.5 445.3,123.7 443.6,123.6 440.9,123.2 439.2,123.7 437.0,125.1 436.6,127.3 436.2,129.5 436.1,131.4 437.0,133.4 438.1,135.1 439.7,136.0 442.5,135.5 444.0,134.5 444.4,132.9 447.0,132.3 448.1,132.5 447.5,134.5 446.7,135.7 446.7,137.3 446.0,138.5 449.2,138.7 451.4,139.0 452.3,139.6 451.8,142.3 451.9,144.0 453.1,145.7 454.8,146.5 456.3,145.7 458.1,145.9 458.9,146.7 M458.2,148.2 457.6,147.0 456.5,146.2 455.6,148.1 454.2,147.7 452.6,147.0 450.3,145.1 449.4,144.0 447.5,141.8 446.4,141.6 444.8,140.9 442.3,140.1 440.3,138.3 438.1,138.8 435.3,137.9 431.9,136.7 429.2,135.1 427.5,133.4 427.5,131.2 425.3,129.0 423.3,127.3 421.9,125.6 419.9,124.0 419.1,121.7 417.1,120.8 417.4,122.8 419.4,125.6 421.4,127.9 422.5,130.1 423.0,130.6 422.3,130.3 420.3,128.4 418.0,125.6 416.9,125.1 417.7,124.3 416.0,122.5 414.6,120.1 413.0,118.4 410.8,117.8 409.1,115.3 408.6,114.2 406.9,111.7 406.5,108.9 406.9,105.0 406.1,102.3 408.2,101.7 407.4,101.1 405.8,100.2 403.0,98.9 402.4,97.2 400.2,95.3 399.6,94.4 398.0,93.3 395.7,91.4 393.0,91.3 391.3,90.3 389.1,89.6 385.7,89.4 383.5,89.0 380.1,88.9 377.9,90.0 375.7,90.5 376.2,88.5 377.9,88.1 375.1,88.9 373.5,90.5 371.2,92.2 368.5,93.5 365.7,94.7 361.8,95.4 364.6,93.9 366.8,92.8 369.0,91.3 370.1,90.8 366.8,90.9 364.6,90.0 362.3,88.9 360.7,87.7 360.1,86.6 361.8,86.1 365.7,85.5 365.7,84.4 363.4,84.3 360.1,84.4 357.9,83.2 M374.0,92.8 375.1,91.6 372.9,92.1 374.0,92.8 M354.0,85.7 356.8,85.9 355.6,85.3 354.0,85.7 M472.1,87.3 469.3,87.0 464.8,85.5 461.5,84.3 458.1,84.4 458.7,83.3 463.1,83.0 463.7,81.1 460.4,79.4 457.0,78.5 451.4,78.5 446.4,77.7 444.8,76.1 445.9,74.4 450.3,74.0 455.3,74.2 460.4,75.2 465.9,76.9 469.3,78.3 470.4,79.7 474.8,81.1 476.5,82.2 474.3,84.1 473.2,85.9 472.1,87.3 M428.1,79.4 422.5,79.8 418.0,80.2 414.7,78.8 414.1,77.7 418.0,76.6 413.6,75.5 416.9,74.6 422.5,74.9 427.5,74.9 428.6,76.6 431.9,78.3 428.1,79.4 M405.8,76.1 408.0,76.9 411.9,76.3 416.4,74.4 414.7,73.5 410.2,73.3 406.3,74.0 405.8,76.1 M444.8,71.0 449.2,71.3 455.9,71.3 458.7,69.9 461.5,68.8 465.9,67.7 472.6,66.0 476.0,64.4 467.0,63.7 455.9,63.8 447.0,64.7 443.6,66.0 448.1,67.1 449.2,68.8 445.9,69.9 444.8,71.0 M455.9,72.7 453.7,73.3 447.0,73.2 442.5,72.9 442.5,71.3 447.0,71.8 452.6,71.8 455.9,72.7 M448.1,68.3 443.6,69.0 439.2,67.7 441.4,66.0 444.8,66.6 448.1,68.3 M426.9,72.7 422.5,73.3 418.0,72.9 414.7,72.2 416.9,71.3 422.5,71.0 426.9,71.6 426.9,72.7 M437.0,76.1 433.6,76.6 431.4,75.5 433.1,74.0 436.4,74.4 437.0,76.1 M444.2,75.5 440.3,76.1 438.6,74.4 441.4,73.6 444.2,74.0 444.2,75.5 M438.1,72.7 433.6,72.7 431.4,71.6 435.8,70.9 438.1,72.7 M438.1,79.4 434.7,79.4 434.2,78.3 437.0,78.3 438.1,79.4 M455.3,85.5 451.4,86.1 448.1,85.3 449.2,83.3 451.4,82.7 454.2,84.4 455.3,85.5 M479.0,103.2 482.6,104.1 486.0,104.2 486.3,103.2 485.4,101.7 483.2,100.8 482.6,98.9 481.0,100.0 479.3,102.2 479.0,103.2 M407.7,102.3 405.2,101.9 402.1,99.9 403.5,99.7 405.8,100.6 407.7,102.3 M399.1,96.1 396.9,96.1 397.4,97.4 398.9,98.1 399.1,96.1 M476.5,101.6 473.3,100.8 476.0,101.2 476.5,101.6 M476.0,104.6 473.7,104.1 474.8,105.0 476.0,104.6 M496.0,89.4 491.5,88.3 488.2,85.5 486.0,82.7 484.9,79.4 488.2,78.3 483.8,76.6 482.6,74.4 479.3,71.9 472.6,71.4 467.0,70.5 464.8,69.1 471.5,67.7 472.6,66.0 480.4,64.7 494.9,64.4 506.0,63.2 517.2,63.6 522.7,64.9 520.5,66.0 530.5,65.5 525.0,67.1 524.4,69.4 521.6,71.0 523.3,72.7 520.5,74.4 518.3,76.1 520.5,77.7 516.1,77.9 517.2,79.4 511.6,80.3 508.3,81.6 503.8,83.0 500.5,83.8 498.8,86.1 497.1,88.9 496.0,89.4 M520.5,85.0 518.3,83.3 520.5,82.3 525.0,82.5 528.3,82.5 530.0,83.8 528.3,84.6 524.4,85.6 520.5,85.0 M450.3,131.8 453.7,130.4 455.9,130.6 459.2,132.1 462.4,133.8 458.7,134.1 458.1,133.2 455.3,132.0 453.1,131.5 450.3,131.8 M462.0,135.8 464.3,134.1 467.0,134.2 468.8,135.5 466.5,136.0 465.1,136.4 462.0,135.8 M457.8,135.9 460.0,136.2 459.2,136.4 457.8,135.9 M470.2,135.8 471.8,135.9 471.5,136.2 470.2,136.2 470.2,135.8 M476.5,144.2 477.1,145.0 476.1,145.0 476.5,144.2 M458.1,128.2 459.2,126.7 M458.7,129.5 458.4,128.9 M458.9,146.7 459.5,147.3 460.8,145.7 460.9,144.5 461.7,143.9 463.7,143.4 465.1,142.4 465.6,143.1 464.9,143.4 465.4,144.1 466.8,143.4 467.0,142.7 468.7,143.6 469.3,144.6 471.5,144.5 473.2,144.9 476.0,144.3 475.4,145.1 477.1,145.7 477.3,146.8 478.4,147.0 479.9,148.5 481.3,149.6 483.8,149.6 484.9,149.8 487.1,151.2 487.6,151.6 489.3,154.3 489.3,155.7 491.0,156.8 491.5,157.4 493.8,157.4 495.4,159.0 498.2,159.4 500.5,159.4 502.1,160.4 503.8,161.6 505.7,162.1 506.3,164.1 506.0,166.3 503.8,168.5 502.1,170.7 501.6,173.0 501.6,175.8 500.7,178.0 499.3,180.8 498.2,181.9 495.4,182.2 493.2,183.0 491.0,185.0 490.9,187.5 489.3,189.7 487.1,191.9 485.5,193.8 484.3,195.0 482.1,195.0 480.0,194.0 481.3,195.8 481.5,196.7 481.0,198.6 479.3,199.4 476.0,199.7 475.7,201.4 472.6,201.9 472.6,203.6 474.1,203.6 472.3,204.7 472.1,206.4 469.8,207.5 471.5,208.8 471.5,209.7 469.8,211.4 468.2,213.1 468.8,214.5 465.9,216.2 464.8,214.7 462.6,214.2 460.9,212.0 460.9,209.7 462.0,208.4 460.9,208.1 462.6,206.4 463.7,204.7 464.0,203.0 462.9,201.9 463.1,200.3 463.1,197.7 464.0,195.8 465.4,193.0 465.4,189.7 465.9,187.5 466.5,184.7 466.7,181.9 466.8,179.1 466.6,176.8 465.4,175.5 462.6,174.1 460.1,171.9 459.0,169.6 457.6,166.8 456.1,164.3 454.6,162.9 454.5,161.3 455.6,160.0 455.9,159.0 454.8,158.7 455.3,157.4 455.9,155.7 457.0,154.9 457.2,154.6 457.6,153.5 458.7,152.4 458.9,150.1 458.7,149.0 458.2,148.2 458.9,146.7 M468.6,214.9 466.5,215.1 465.9,216.4 464.8,217.0 468.2,217.9 470.9,217.8 472.4,217.2 470.4,216.4 468.9,215.5 468.6,214.9 M477.1,213.6 479.3,213.4 480.6,213.7 478.7,214.5 477.1,214.2 477.1,213.6 M462.6,203.0 462.2,204.5 463.1,204.2 463.0,202.9 462.6,203.0 M488.8,156.3 490.4,156.5 491.0,157.7 488.8,157.9 488.8,156.3 M579.3,78.5 576.2,77.2 573.6,77.1 569.5,77.9 565.1,78.8 561.7,80.3 559.5,82.7 557.3,84.4 554.5,85.7 551.1,87.2 550.6,88.9 551.1,90.5 552.8,91.6 554.5,91.4 556.7,90.3 557.5,90.5 557.8,91.6 558.9,93.3 559.3,94.4 561.0,94.4 562.8,93.3 563.4,92.2 564.0,90.9 565.6,90.0 565.1,88.9 564.2,87.7 565.1,86.1 567.9,85.2 569.0,83.8 570.1,83.0 572.0,83.0 573.2,83.8 572.3,84.6 569.5,86.1 568.7,87.7 569.0,88.9 570.6,89.5 572.9,89.2 576.0,88.9 577.3,89.4 578.7,89.5 576.2,89.9 574.0,89.9 572.3,90.1 571.2,90.5 571.4,91.3 572.2,91.3 572.1,91.9 571.8,92.8 570.6,92.8 570.1,92.1 569.0,92.3 568.4,93.3 568.5,93.9 568.4,94.7 567.3,95.1 567.0,95.7 565.6,95.4 564.0,95.3 561.0,96.2 558.9,95.7 557.3,96.1 556.2,95.5 555.6,95.2 556.2,94.4 556.7,93.3 556.7,92.1 555.6,92.5 554.2,93.0 554.2,94.4 554.7,95.1 554.8,96.1 553.9,96.5 552.8,96.8 550.6,96.9 550.3,97.4 549.5,98.3 548.8,99.0 547.8,99.3 546.8,99.8 546.7,100.6 545.2,101.1 543.7,101.2 543.2,101.0 543.3,102.1 541.7,101.9 539.8,102.3 540.2,103.0 542.2,103.6 543.0,104.5 543.8,105.0 543.7,106.6 543.1,107.9 540.8,107.9 538.3,107.7 536.1,107.6 534.8,108.4 535.2,109.6 535.3,111.1 534.5,113.0 535.2,115.0 536.8,114.8 538.0,115.5 538.8,116.2 540.1,115.4 542.6,115.4 544.2,114.4 545.0,113.1 544.7,112.3 545.9,110.8 547.5,110.1 548.6,109.0 548.4,108.1 550.0,107.9 551.7,108.2 553.4,107.5 554.8,106.8 556.4,107.5 556.7,108.5 558.6,109.7 560.4,110.4 561.0,110.8 562.5,111.7 562.5,112.9 562.5,113.9 563.4,113.5 564.1,112.8 563.4,112.0 564.0,111.1 565.5,111.7 565.6,111.4 564.0,110.6 562.8,109.6 562.0,109.6 560.6,108.7 560.2,107.7 558.9,107.0 558.7,105.9 560.2,105.4 560.3,106.1 561.2,105.8 562.0,107.0 563.4,107.9 564.6,108.5 565.6,109.0 566.6,109.6 566.6,111.1 567.3,112.0 568.1,113.0 568.7,113.6 568.6,114.2 569.2,115.3 570.1,115.6 570.8,115.6 570.4,114.5 570.9,114.0 571.8,114.3 571.2,113.4 570.5,112.5 570.2,111.3 571.2,111.5 571.8,110.9 574.0,110.7 574.2,111.6 574.9,111.1 577.3,110.6 576.3,109.9 576.2,109.5 575.7,108.9 576.2,108.0 576.9,107.6 577.0,106.7 578.0,105.9 579.3,104.5 580.7,104.5 582.3,104.9 581.2,105.7 582.3,106.7 584.6,106.0 585.7,105.7 584.0,104.8 584.6,104.3 586.2,104.0 587.6,103.8 588.7,103.6 587.4,104.6 587.1,105.4 586.2,105.9 587.9,106.9 589.4,107.8 589.6,107.9 591.3,108.9 591.4,110.0 589.6,110.6 587.4,110.6 585.7,110.3 584.0,109.5 581.8,109.5 580.1,110.3 577.5,110.4 577.3,110.6 575.1,111.3 574.2,111.7 574.5,112.5 575.1,113.4 575.4,114.7 576.4,115.4 577.9,115.9 579.1,115.3 580.7,115.9 582.9,115.8 584.6,115.5 585.2,116.2 585.0,116.3 585.0,117.7 584.1,119.4 583.5,121.2 583.1,121.4 M538.7,100.4 541.1,100.2 543.9,99.8 546.6,99.2 545.6,98.9 546.9,97.6 545.4,97.2 545.0,96.4 543.3,95.0 542.8,93.9 541.7,93.9 542.8,92.0 540.6,92.0 541.7,91.0 539.5,91.0 538.3,92.2 538.9,93.9 539.5,95.0 541.1,95.1 541.7,96.1 541.7,96.8 540.0,96.9 540.3,98.0 539.2,98.6 541.7,99.0 540.0,99.4 538.7,100.4 M538.3,98.1 536.1,98.7 533.9,98.7 534.4,96.9 533.9,95.9 535.8,95.4 536.1,94.8 538.1,94.8 538.9,95.5 538.1,96.9 538.3,98.1 M537.2,92.2 536.9,91.3 M543.6,89.4 543.7,88.6 M537.2,87.2 537.6,86.9 M554.3,112.8 554.4,110.6 555.6,110.5 555.8,112.5 555.0,112.8 554.3,112.8 M554.7,110.0 554.7,108.8 555.5,108.4 555.6,109.9 554.7,110.0 M558.9,113.9 560.1,113.7 562.3,113.6 561.8,115.4 559.5,114.7 558.9,113.9 M571.3,116.9 572.3,116.7 574.2,117.0 572.5,117.4 571.3,116.9 M581.0,117.5 581.8,116.9 583.5,116.6 582.8,117.4 581.8,117.7 581.0,117.5 M547.7,112.3 548.6,111.8 548.7,112.4 547.7,112.3 M573.4,115.0 573.2,114.9 M557.3,94.7 558.9,93.9 558.7,94.8 557.3,94.7 M555.9,94.8 556.9,94.4 556.9,95.0 555.9,94.8 M565.3,92.8 566.2,91.8 565.9,92.4 565.3,92.8 M569.5,91.4 570.6,91.0 570.1,91.6 569.5,91.4 M602.4,77.2 604.1,75.5 607.4,73.8 611.9,71.6 620.8,70.5 618.5,71.8 611.9,73.3 608.5,75.5 608.5,77.5 604.6,77.4 602.4,77.2 M583.1,121.4 581.0,121.4 579.6,121.2 578.4,121.5 577.3,121.9 575.1,121.4 573.1,121.1 570.6,119.9 569.0,119.6 567.3,120.6 567.3,121.9 566.2,122.5 564.5,121.8 562.3,120.3 559.7,119.6 557.8,119.3 556.4,118.4 556.9,116.7 557.3,115.0 556.2,114.7 554.6,115.2 551.7,115.0 548.4,115.3 545.0,116.4 542.6,117.2 540.6,117.0 539.1,116.3 538.3,116.4 537.4,118.4 535.6,119.2 534.1,121.2 534.2,122.8 533.3,124.0 531.7,125.1 530.3,125.4 528.9,127.0 527.2,129.5 526.1,132.4 527.0,134.0 526.6,136.2 526.6,138.4 525.5,139.9 526.3,141.2 526.4,142.4 528.3,144.0 529.8,145.7 530.2,146.2 530.5,147.3 532.2,148.6 535.0,150.7 536.7,151.4 539.5,150.5 541.6,150.6 543.3,150.9 546.4,149.5 548.0,149.1 550.0,149.2 551.1,150.7 552.3,151.5 554.5,151.0 555.8,152.4 555.9,153.7 555.6,155.1 555.0,157.0 555.6,159.0 557.4,160.6 558.4,161.8 558.7,162.9 559.8,166.1 560.4,168.5 558.9,171.3 558.4,173.5 558.2,175.5 559.5,179.1 561.2,181.3 561.7,184.1 562.1,186.3 563.4,188.1 565.1,191.4 565.4,193.6 565.6,194.5 567.3,195.0 570.1,194.1 573.4,194.1 575.7,193.4 578.4,190.8 579.6,189.6 581.2,188.0 581.7,186.2 581.4,185.0 584.3,183.0 584.3,180.8 583.8,178.5 585.7,176.9 588.5,175.2 590.2,173.0 590.1,170.2 590.0,168.0 589.0,165.7 588.8,163.8 588.2,162.4 588.7,161.5 589.6,159.6 591.3,158.2 594.0,155.1 596.3,153.5 598.5,151.2 600.2,148.5 601.6,145.7 602.1,143.1 599.6,143.7 596.8,144.2 594.6,144.7 593.1,143.4 593.0,142.1 591.3,140.7 589.6,139.2 588.8,139.0 588.0,136.2 586.6,132.9 586.1,131.8 584.7,129.5 582.9,126.7 581.2,123.0 582.3,124.8 583.1,125.3 583.9,123.4 583.1,121.4 M599.9,169.6 601.1,173.5 600.2,175.8 597.9,183.0 595.4,184.7 593.7,182.4 593.5,180.2 594.4,178.0 594.0,175.2 596.8,173.7 598.5,171.3 599.9,169.6 M526.2,124.7 527.0,124.5 M529.2,124.8 529.9,124.0 M517.9,137.5 518.8,139.3 M593.3,169.1 593.5,169.5 M606.7,179.7 607.1,179.9 M609.1,178.8 609.3,179.0 M552.4,155.9 552.5,156.1 M568.4,176.6 568.4,180.8 567.3,180.8 567.3,183.9 M580.7,185.2 579.6,185.0 579.3,186.1 579.9,186.7 580.8,186.1 580.7,185.2 M575.1,189.2 576.8,188.1 577.8,189.1 576.5,190.3 575.1,189.2 M584.0,123.4 584.0,125.1 585.7,127.3 586.5,129.0 588.5,131.8 588.7,132.9 590.1,134.5 591.8,136.8 592.7,138.0 592.9,140.1 593.4,142.1 595.2,142.0 598.5,140.7 600.7,139.6 603.2,138.2 604.2,137.8 606.3,137.1 608.0,135.7 609.4,134.5 609.4,133.4 610.7,132.3 611.6,131.2 610.2,130.0 608.5,129.3 607.7,128.4 607.8,127.0 607.4,127.5 606.6,128.1 605.2,129.3 602.9,129.5 602.5,129.3 602.5,127.5 602.2,127.2 601.6,127.9 601.6,128.6 600.9,127.6 600.7,126.5 599.6,125.5 598.9,124.5 598.5,123.5 598.5,122.8 599.0,122.8 599.6,122.3 600.9,122.8 601.6,124.0 602.4,125.3 604.1,126.5 605.7,126.6 607.7,126.0 608.7,127.6 610.2,127.7 611.9,128.1 613.6,128.2 M604.6,142.6 605.7,142.2 M579.3,78.5 581.8,78.9 585.1,79.2 590.7,80.8 590.9,82.2 587.9,82.7 584.0,82.0 581.8,82.2 583.5,83.8 583.8,84.5 586.8,85.2 587.4,84.4 590.1,84.3 589.6,82.7 591.8,82.2 594.0,82.5 594.4,80.5 593.3,79.8 596.3,80.5 596.8,81.7 598.5,81.0 604.1,80.2 605.2,79.6 608.5,79.8 611.9,79.4 613.0,78.5 616.9,79.1 619.7,79.6 621.3,80.2 619.7,78.8 619.7,77.2 621.3,75.5 623.0,74.7 625.8,75.2 625.8,77.2 626.3,79.4 625.2,81.6 626.9,82.2 627.5,80.5 628.6,77.2 627.5,75.5 630.8,76.1 631.9,77.2 634.7,76.1 634.7,74.4 640.8,74.0 641.9,72.7 650.9,71.6 656.4,71.0 660.9,69.7 664.2,70.7 670.9,71.6 670.9,73.8 667.6,74.0 671.5,74.4 676.5,74.6 682.0,74.4 686.5,74.6 688.7,75.5 689.8,77.2 693.2,76.6 697.6,76.6 701.0,75.3 707.7,75.7 712.1,76.3 714.3,77.2 721.0,77.2 723.8,78.6 728.8,78.7 734.4,78.3 735.5,79.4 741.1,78.5 745.5,79.4 M344.5,79.4 347.8,81.1 352.3,81.6 355.6,82.6 352.9,84.1 352.3,84.6 349.0,84.1 346.7,82.7 344.5,83.3 M745.5,83.3 744.4,84.2 742.8,84.2 744.4,86.1 745.0,86.9 740.0,87.2 736.6,88.5 734.4,89.4 729.9,89.4 727.7,90.0 726.6,91.6 725.5,91.9 726.6,93.9 725.5,95.0 723.3,97.2 721.6,97.4 719.6,99.4 718.8,97.2 718.2,93.9 719.9,91.9 723.3,89.4 727.2,87.7 727.7,86.6 723.3,87.4 719.9,87.7 717.7,90.0 715.5,90.5 712.1,89.9 707.7,90.2 704.3,90.2 701.0,91.9 698.2,94.4 696.0,95.3 698.8,96.1 701.0,96.7 702.1,98.0 701.5,99.4 701.5,101.7 699.3,104.5 696.5,106.7 693.7,108.4 691.5,108.4 690.6,109.1 689.5,110.0 688.2,111.7 687.1,112.3 688.2,113.4 689.3,115.0 689.1,116.9 687.1,117.6 685.7,117.8 685.9,116.2 686.2,114.5 684.8,114.2 684.3,113.7 684.6,112.3 683.6,111.7 680.9,112.8 680.1,113.0 680.9,111.1 679.8,110.7 677.6,112.3 676.1,112.8 677.0,113.9 677.6,114.7 679.8,114.4 681.5,114.8 679.8,115.6 678.1,117.0 679.3,118.9 680.7,120.8 680.7,121.9 679.3,122.5 680.9,123.1 680.4,124.7 678.7,126.7 678.1,127.9 676.5,129.0 674.8,130.6 672.2,131.4 670.9,131.8 668.7,132.4 668.0,133.6 667.3,132.4 665.4,132.3 663.9,133.2 662.9,135.1 663.7,136.8 664.8,137.9 666.2,139.2 666.8,141.8 666.7,143.4 664.8,144.7 663.9,144.8 663.7,145.7 662.0,146.7 661.8,145.1 661.3,144.7 660.3,144.5 659.7,143.3 658.6,142.3 657.5,142.1 657.4,141.3 656.4,141.4 656.4,142.9 655.6,144.6 655.6,145.9 656.8,147.0 657.0,148.2 658.3,148.7 658.8,149.4 660.2,150.9 660.3,153.1 661.1,154.7 660.2,154.7 657.9,153.1 657.0,151.2 656.8,149.1 655.3,147.7 654.5,147.3 654.7,145.1 654.9,142.9 654.2,140.7 653.9,138.1 652.5,137.8 651.2,138.7 650.1,138.4 650.3,136.8 649.2,134.2 648.0,133.2 647.3,131.4 645.8,131.2 644.2,132.0 643.1,132.1 641.9,132.9 641.7,133.8 640.3,134.3 638.0,136.4 636.6,137.9 635.0,138.7 634.3,139.6 634.5,141.6 633.9,143.4 633.9,144.8 633.0,145.9 632.1,146.3 631.4,147.2 630.2,146.2 629.5,143.7 628.3,141.8 627.5,139.6 626.3,136.8 626.1,135.1 626.0,132.9 625.8,132.0 625.2,132.9 623.9,133.1 621.9,131.4 623.0,130.9 621.7,130.3 621.0,129.9 620.0,129.3 619.4,128.5 619.1,128.0 616.9,128.2 613.6,128.2 M650.9,68.3 656.4,67.7 662.0,68.8 656.4,69.4 650.9,68.3 M647.5,67.1 653.1,66.0 655.3,67.1 647.5,67.1 M697.6,72.4 702.1,71.6 706.5,72.2 712.1,72.5 707.7,72.9 701.0,72.9 697.6,72.4 M701.0,74.4 704.3,74.0 703.2,74.7 701.0,74.4 M344.5,76.6 346.7,76.9 345.6,77.3 344.5,77.3 M597.0,106.7 597.9,108.4 599.0,109.5 600.2,111.0 601.1,111.3 599.9,112.5 599.5,113.5 600.2,114.5 601.8,115.3 604.1,115.2 605.2,114.7 604.8,112.8 604.1,111.7 605.7,110.8 603.8,110.3 603.5,108.9 602.2,108.1 601.1,106.7 601.8,105.9 604.1,105.8 604.1,104.1 601.8,103.9 599.6,104.5 598.5,105.0 597.4,106.1 597.0,106.7 M644.1,125.8 644.5,124.8 646.4,125.1 647.5,125.6 647.5,126.3 645.1,126.5 644.1,125.8 M633.9,145.5 634.4,145.3 635.6,146.8 636.3,148.5 635.5,149.4 634.4,149.6 633.8,147.9 633.9,145.5 M666.1,134.9 667.0,134.0 668.7,134.0 668.1,135.3 667.0,136.0 666.1,134.9 M680.4,128.1 680.9,129.0 679.6,131.8 678.8,130.6 679.8,128.4 680.4,128.1 M690.8,118.4 692.1,118.0 693.7,117.9 695.4,117.7 696.2,118.9 697.6,117.7 699.6,117.6 700.8,117.3 702.0,116.5 702.1,113.9 703.2,112.3 702.5,110.1 701.2,110.4 701.0,111.7 700.4,113.4 699.3,114.7 697.6,114.5 697.9,115.3 696.5,116.5 694.3,116.6 692.6,116.8 691.0,117.8 690.8,118.4 M701.3,110.0 702.1,108.9 704.5,109.5 706.9,108.0 705.8,107.2 703.2,105.6 702.8,106.7 702.4,108.1 701.0,108.9 701.3,110.0 M689.8,118.9 691.0,118.6 691.8,119.5 691.3,121.3 690.5,121.6 690.1,120.1 689.5,119.3 689.8,118.9 M692.6,118.5 694.6,118.0 695.1,118.6 693.4,119.2 692.6,119.6 692.6,118.5 M703.2,95.8 704.3,97.2 704.7,100.6 706.0,101.7 704.3,103.9 704.9,105.0 703.2,105.0 703.2,102.8 703.2,100.6 703.0,98.3 703.2,95.8 M707.7,106.7 709.9,105.6 M712.1,105.0 714.3,103.9 M716.6,101.7 718.8,100.0 M687.3,127.1 687.9,126.4 M689.1,124.8 689.5,124.5 M685.6,119.2 686.4,118.9 M679.3,135.7 680.9,135.7 681.3,137.9 680.5,139.6 680.9,140.7 683.2,141.8 682.9,142.2 681.5,141.1 679.8,141.0 679.3,140.1 678.7,138.4 679.3,135.7 M680.9,148.5 682.6,146.8 684.8,145.3 685.9,147.3 685.6,149.0 684.8,149.9 683.2,149.0 682.6,147.7 680.9,148.5 M683.5,142.3 684.6,142.6 685.0,144.0 684.0,143.7 683.5,142.3 M680.9,143.1 682.0,143.4 682.4,145.9 681.5,145.3 680.9,144.6 680.9,143.1 M675.6,146.9 678.1,143.8 677.6,144.9 675.6,146.9 M679.3,141.2 680.4,141.6 680.0,142.6 679.3,141.2 M682.5,144.6 683.2,144.0 682.9,145.1 682.5,144.6 M666.4,154.6 667.1,154.0 668.7,154.4 669.0,153.3 670.9,152.7 672.0,151.2 673.7,150.1 675.1,148.5 676.1,149.2 677.6,150.5 676.5,151.5 676.0,152.4 676.5,153.8 677.6,155.1 676.2,155.4 675.9,157.2 674.8,157.9 674.6,160.2 672.7,160.7 670.9,159.8 669.6,160.2 667.8,159.5 667.6,157.7 666.4,156.6 666.4,154.6 M651.2,150.0 653.6,150.5 654.5,151.6 656.4,153.3 657.5,154.0 659.8,155.5 660.7,156.6 661.4,158.2 663.1,159.6 663.0,162.7 661.5,162.7 660.7,161.8 659.0,160.7 657.3,158.7 656.8,157.2 655.3,155.4 655.0,154.4 653.3,152.7 651.4,150.9 651.2,150.0 M662.2,163.8 663.7,162.9 665.9,163.5 668.1,163.9 668.7,163.4 670.6,164.1 672.6,164.8 672.5,165.8 669.8,165.5 666.4,164.8 663.7,164.5 662.2,163.8 M672.7,165.4 673.8,165.4 673.4,166.1 672.7,165.4 M674.2,165.6 675.0,165.7 674.6,166.2 674.2,165.6 M675.1,165.7 677.6,165.5 677.4,166.1 675.4,166.3 675.1,165.7 M678.5,165.7 681.8,165.5 681.5,166.1 678.7,166.1 678.5,165.7 M682.6,167.7 683.7,166.5 686.5,165.6 685.9,166.5 683.2,167.7 682.6,167.7 M677.6,166.8 679.6,167.4 678.5,167.5 677.6,166.8 M678.4,162.5 678.1,160.2 677.4,159.3 678.5,156.5 678.7,155.4 679.8,154.9 682.0,155.3 684.3,154.5 683.7,155.7 682.0,155.8 679.6,155.8 679.0,157.3 680.4,157.3 682.4,157.2 681.8,157.9 680.4,158.4 681.5,159.9 682.0,161.1 681.5,162.2 680.7,161.5 680.4,160.5 679.7,159.4 679.1,160.2 679.1,162.4 678.4,162.5 M687.3,154.0 687.6,155.9 688.2,155.7 688.5,154.6 687.6,154.8 687.3,154.0 M687.6,159.6 689.3,159.5 690.7,160.0 689.3,160.2 687.6,159.6 M685.6,159.8 686.7,160.0 685.9,160.5 685.6,159.8 M694.5,162.7 695.1,163.5 M691.5,164.4 691.7,165.2 M662.8,167.8 662.9,168.0 M653.1,154.8 654.0,155.5 M655.0,157.4 655.6,158.3 M663.1,158.0 663.9,159.4 662.5,158.5 M665.0,159.2 665.6,159.7 M691.0,157.2 692.6,156.7 694.3,157.2 695.4,159.9 697.1,158.7 698.8,158.0 702.1,159.2 704.3,160.0 706.1,160.6 707.4,162.2 709.0,162.9 709.7,163.8 708.8,164.1 709.9,165.4 711.6,167.1 713.0,167.7 711.6,167.8 709.7,167.4 708.2,166.1 706.3,164.8 704.9,165.5 704.3,166.5 702.1,166.4 700.4,165.3 698.8,165.5 698.4,164.4 699.5,163.8 698.8,162.4 696.0,161.2 693.7,160.5 693.0,160.7 692.1,159.5 694.1,158.8 692.4,158.7 691.0,157.8 691.0,157.2 M710.2,162.6 712.1,162.4 714.3,160.9 714.7,161.8 713.2,162.9 711.6,163.2 710.2,162.6 M713.0,159.3 715.2,161.1 M708.6,158.5 709.1,158.6 M703.8,168.2 704.9,170.5 705.2,172.3 706.9,173.0 707.1,174.6 707.9,177.2 709.7,178.0 711.0,179.1 711.8,181.1 713.0,182.2 715.4,184.4 715.7,186.9 716.1,188.1 715.5,190.8 714.9,192.5 713.6,193.9 712.3,196.4 712.1,198.0 709.9,198.5 708.0,199.7 706.3,198.6 704.9,199.5 702.7,198.9 701.0,197.8 700.4,196.1 699.0,195.8 699.3,194.9 698.4,193.0 698.2,194.7 696.5,195.0 695.7,194.6 694.5,193.0 693.7,192.0 691.2,191.4 688.7,191.5 685.4,192.1 683.2,193.0 682.6,194.0 678.7,194.0 676.5,195.2 674.2,195.1 673.1,194.4 673.9,191.9 673.1,189.9 672.2,187.5 671.2,185.2 671.7,181.3 672.2,180.5 675.0,179.2 677.6,178.5 680.1,178.0 681.3,176.3 681.2,175.2 682.6,175.5 682.8,174.3 684.3,173.2 685.4,172.0 686.5,171.6 687.8,172.9 689.3,172.9 690.2,171.0 690.7,170.1 692.1,169.9 692.7,169.0 695.4,169.7 697.4,169.9 696.5,171.3 696.0,172.7 697.6,173.9 699.9,175.0 701.5,175.9 702.4,174.1 702.8,171.9 702.9,170.2 703.8,168.2 M706.2,201.6 708.2,202.0 710.2,201.8 710.1,203.3 709.3,204.4 707.9,204.8 706.9,203.6 706.2,201.6 M690.2,169.0 691.3,168.8 690.7,169.4 690.2,169.0 M737.4,194.6 739.2,195.8 740.0,197.3 741.1,198.1 743.6,198.1 743.2,199.9 742.2,200.2 742.0,201.4 740.3,202.6 739.6,202.2 740.1,200.8 738.6,200.0 739.6,198.8 739.5,197.3 737.7,195.2 737.4,194.6 M737.4,201.4 738.9,202.3 739.1,203.0 737.5,204.7 735.8,205.6 735.2,207.4 733.3,208.2 731.6,207.7 730.5,207.3 732.2,205.5 735.0,204.2 736.1,202.8 737.4,201.4 M727.7,178.8 729.4,180.2 731.1,181.1 729.2,179.4 727.7,178.8 M742.5,175.8 743.9,176.1 743.1,176.5 742.5,175.8 M744.4,174.4 745.4,174.8 M730.6,173.0 731.3,173.7 M732.5,175.9 732.7,176.1 M733.6,177.2 733.8,178.0 M352.6,171.4 354.0,171.9 M378.4,175.8 378.8,176.1 M503.2,216.4 504.9,217.0 M515.5,221.4 515.7,221.7 M344.5,256.5 344.5,250.5 354.5,251.0 376.5,251.5 378.5,250.5 374.5,249.0 384.5,247.5 371.5,246.0 381.5,244.5 370.5,243.0 383.5,241.5 392.5,240.5 398.5,239.5 410.5,239.5 420.5,238.5 428.5,239.5 431.5,238.5 440.5,238.5 446.5,237.5 452.5,238.5 460.5,238.5 467.5,238.5 470.5,235.5 472.5,232.5 476.5,230.5 481.5,227.5 478.5,229.5 476.5,232.5 478.5,235.5 479.5,238.5 476.5,240.5 468.5,241.5 460.5,241.5 455.5,242.5 453.5,244.5 458.5,246.5 465.5,247.5 472.5,248.5 482.5,248.5 493.5,247.5 500.5,246.5 505.5,244.5 508.5,245.5 510.5,243.5 516.5,242.5 522.5,240.5 528.5,238.5 533.5,236.5 539.5,236.5 545.5,236.5 552.5,235.5 558.5,235.5 564.5,234.5 572.5,234.5 580.5,233.5 588.5,232.5 595.5,231.5 602.5,230.5 608.5,231.5 614.5,232.5 619.5,233.5 621.5,234.5 623.5,236.5 626.5,234.5 630.5,233.5 636.5,231.5 645.5,231.5 652.5,230.5 660.5,231.5 668.5,230.5 676.5,231.5 684.5,230.5 692.5,230.5 700.5,230.5 705.5,231.5 710.5,232.5 717.5,233.5 722.5,234.5 728.5,235.5 734.5,236.5 733.5,238.5 728.5,239.5 726.5,241.5 731.5,242.5 726.5,244.5 724.5,246.5 730.5,248.5 738.5,249.5 745.5,250.5 745.5,256.5 344.5,256.5 M545.5,236.5 545.5,256.5 M512.5,113.5 513.5,113.5 M517.0,115.5 518.5,115.5 M728.5,93.5 730.5,94.5 M734.5,95.5 736.5,96.5 M740.5,97.5 742.5,98.5 M744.5,99.5 745.5,99.5 M620.5,79.5 623.5,77.0 625.5,80.5 628.5,77.5 631.5,81.0 634.5,76.5 637.5,78.5 640.5,76.0 M456.5,76.5 462.5,79.5 468.5,82.5 474.5,84.5 476.5,82.5 M458.5,72.5 466.5,75.5 472.5,79.5 M408.5,80.5 416.5,82.5 424.5,81.5 430.5,83.5 436.5,82.5 M412.5,77.5 420.5,78.5 428.5,77.5 M626.5,142.5 626.5,143.5 M626.5,146.5 626.5,147.5 M626.5,150.5 626.5,151.5 M626.5,154.5 626.5,155.5 M626.5,157.5 626.5,158.5 M610.5,214.5 612.5,214.5 M652.5,170.5 653.5,170.5 M661.5,169.5 662.5,169.5 M606.5,161.5 606.5,162.5 M706.5,139.5 707.5,140.5 M694.5,147.5 695.5,147.5 M698.5,146.5 699.5,146.5 M721.5,148.5 722.5,148.5 M737.5,154.5 738.5,155.5 M730.5,173.5 732.5,176.5"/>
<path stroke-width="2" d="M562.8,99.9 561.5,99.6 M561.5,99.6 561.4,98.3 560.8,97.2 561.0,96.2 M561.5,99.6 559.5,100.1 558.6,100.3 559.3,101.3 560.4,102.1 M560.4,102.1 559.5,103.3 556.7,103.3 555.7,103.3 M560.4,102.1 561.7,101.7 563.8,102.1 M560.2,105.6 562.1,105.6 563.4,104.5 M560.3,104.5 563.0,104.0 M560.3,104.5 560.2,105.4 M560.3,104.5 558.6,103.9 556.7,104.0 M556.7,104.0 556.2,104.7 555.0,105.0 554.4,104.6 552.8,105.1 M556.7,104.0 555.7,103.3 M555.7,103.3 554.5,103.1 553.5,103.2 M553.5,103.2 552.6,103.6 551.7,104.7 552.8,105.1 M552.8,105.1 552.5,106.1 M553.5,103.2 554.2,101.7 552.1,101.1 M552.1,101.1 551.5,101.1 550.4,100.6 M552.1,101.1 551.8,100.4 551.5,101.1 M551.8,100.4 551.7,99.7 M551.7,99.7 551.4,99.2 549.8,99.0 M551.7,99.7 551.8,98.6 552.8,98.0 552.8,96.8 M554.7,95.1 555.6,95.2 M583.1,121.4 583.9,123.4 M584.0,123.4 584.6,121.2 584.7,119.8 M584.1,119.4 584.9,119.2 M585.0,117.7 585.8,118.2 584.9,119.2 M584.8,119.8 586.0,120.3 M585.2,116.2 585.9,115.3 M586.8,122.8 585.1,123.7 584.0,123.6 584.0,123.4 M431.4,80.7 435.8,80.5 438.1,80.0 438.6,78.8 440.3,76.3 442.5,77.9 444.2,79.4 447.0,79.8 449.2,81.1 450.3,78.8 453.7,78.7 454.2,80.5 453.1,82.2 449.2,82.4 M454.8,98.9 456.5,99.1 457.3,98.3 M462.6,86.9 464.8,87.7 467.0,88.3 467.6,90.5 469.8,91.3 471.5,90.8 473.2,89.1 476.0,92.2 M478.2,100.3 473.7,100.3 470.9,100.3 467.6,103.0 471.5,101.7 473.2,101.9 472.6,103.3 473.2,104.8 476.0,105.2 478.2,104.5 477.1,105.8 474.3,106.7 472.1,107.8 471.3,107.0 473.2,105.6 470.4,106.1 468.2,107.2 466.5,108.1 466.3,109.5 467.0,109.7 465.4,110.1 462.6,111.0 M447.5,134.5 446.7,135.7 446.7,137.3 446.0,138.5 449.2,138.7 451.4,139.0 452.3,139.6 451.8,142.3 451.9,144.0 453.1,145.7 M454.2,147.7 452.6,147.0 450.3,145.1 449.4,144.0 447.5,141.8 446.4,141.6 444.8,140.9 442.3,140.1 M425.3,129.0 423.3,127.3 421.9,125.6 419.9,124.0 419.1,121.7 417.1,120.8 417.4,122.8 419.4,125.6 421.4,127.9 422.5,130.1 423.0,130.6 422.3,130.3 420.3,128.4 418.0,125.6 416.9,125.1 417.7,124.3 416.0,122.5 M405.8,100.2 403.0,98.9 402.4,97.2 400.2,95.3 399.6,94.4 398.0,93.3 395.7,91.4 393.0,91.3 391.3,90.3 389.1,89.6 385.7,89.4 383.5,89.0 380.1,88.9 377.9,90.0 375.7,90.5 376.2,88.5 377.9,88.1 375.1,88.9 373.5,90.5 371.2,92.2 368.5,93.5 365.7,94.7 361.8,95.4 364.6,93.9 366.8,92.8 369.0,91.3 370.1,90.8 366.8,90.9 364.6,90.0 362.3,88.9 360.7,87.7 360.1,86.6 M374.0,92.8 375.1,91.6 372.9,92.1 374.0,92.8 M472.1,87.3 469.3,87.0 464.8,85.5 461.5,84.3 M463.1,83.0 463.7,81.1 460.4,79.4 457.0,78.5 451.4,78.5 446.4,77.7 444.8,76.1 445.9,74.4 450.3,74.0 455.3,74.2 460.4,75.2 465.9,76.9 469.3,78.3 470.4,79.7 474.8,81.1 476.5,82.2 474.3,84.1 473.2,85.9 472.1,87.3 M444.8,71.0 449.2,71.3 455.9,71.3 458.7,69.9 461.5,68.8 465.9,67.7 472.6,66.0 476.0,64.4 467.0,63.7 455.9,63.8 447.0,64.7 443.6,66.0 448.1,67.1 449.2,68.8 445.9,69.9 444.8,71.0 M455.9,72.7 453.7,73.3 447.0,73.2 442.5,72.9 442.5,71.3 447.0,71.8 452.6,71.8 455.9,72.7 M448.1,68.3 443.6,69.0 439.2,67.7 441.4,66.0 444.8,66.6 448.1,68.3 M437.0,76.1 433.6,76.6 M433.1,74.0 436.4,74.4 437.0,76.1 M444.2,75.5 440.3,76.1 438.6,74.4 441.4,73.6 444.2,74.0 444.2,75.5 M438.1,72.7 433.6,72.7 M431.4,71.6 435.8,70.9 438.1,72.7 M438.1,79.4 434.7,79.4 434.2,78.3 437.0,78.3 438.1,79.4 M402.1,99.9 403.5,99.7 405.8,100.6 M399.1,96.1 396.9,96.1 397.4,97.4 398.9,98.1 399.1,96.1 M476.5,101.6 473.3,100.8 476.0,101.2 476.5,101.6 M476.0,104.6 473.7,104.1 474.8,105.0 476.0,104.6 M496.0,89.4 491.5,88.3 488.2,85.5 486.0,82.7 484.9,79.4 488.2,78.3 483.8,76.6 482.6,74.4 479.3,71.9 472.6,71.4 467.0,70.5 464.8,69.1 471.5,67.7 472.6,66.0 480.4,64.7 494.9,64.4 506.0,63.2 517.2,63.6 522.7,64.9 520.5,66.0 530.5,65.5 525.0,67.1 524.4,69.4 521.6,71.0 523.3,72.7 520.5,74.4 518.3,76.1 520.5,77.7 516.1,77.9 517.2,79.4 511.6,80.3 508.3,81.6 503.8,83.0 500.5,83.8 498.8,86.1 497.1,88.9 496.0,89.4 M520.5,85.0 518.3,83.3 520.5,82.3 525.0,82.5 528.3,82.5 M528.3,84.6 524.4,85.6 520.5,85.0 M450.3,131.8 453.7,130.4 455.9,130.6 459.2,132.1 462.4,133.8 458.7,134.1 458.1,133.2 455.3,132.0 453.1,131.5 450.3,131.8 M489.3,155.7 491.0,156.8 491.5,157.4 493.8,157.4 M468.8,214.5 465.9,216.2 464.8,214.7 462.6,214.2 460.9,212.0 460.9,209.7 462.0,208.4 460.9,208.1 462.6,206.4 463.7,204.7 464.0,203.0 462.9,201.9 463.1,200.3 M468.6,214.9 466.5,215.1 465.9,216.4 464.8,217.0 468.2,217.9 470.9,217.8 472.4,217.2 470.4,216.4 468.9,215.5 468.6,214.9 M462.6,203.0 462.2,204.5 463.1,204.2 463.0,202.9 462.6,203.0 M488.8,156.3 490.4,156.5 491.0,157.7 488.8,157.9 488.8,156.3 M579.3,78.5 576.2,77.2 573.6,77.1 569.5,77.9 565.1,78.8 561.7,80.3 559.5,82.7 557.3,84.4 554.5,85.7 551.1,87.2 550.6,88.9 551.1,90.5 552.8,91.6 554.5,91.4 556.7,90.3 557.5,90.5 557.8,91.6 558.9,93.3 M556.7,93.3 556.7,92.1 555.6,92.5 554.2,93.0 M548.8,99.0 547.8,99.3 546.8,99.8 546.7,100.6 545.2,101.1 543.7,101.2 543.2,101.0 543.3,102.1 M538.3,107.7 536.1,107.6 534.8,108.4 535.2,109.6 535.3,111.1 534.5,113.0 535.2,115.0 536.8,114.8 538.0,115.5 M558.6,109.7 560.4,110.4 561.0,110.8 562.5,111.7 562.5,112.9 562.5,113.9 563.4,113.5 564.1,112.8 563.4,112.0 564.0,111.1 565.5,111.7 565.6,111.4 564.0,110.6 562.8,109.6 562.0,109.6 560.6,108.7 560.2,107.7 558.9,107.0 558.7,105.9 560.2,105.4 560.3,106.1 561.2,105.8 562.0,107.0 563.4,107.9 564.6,108.5 565.6,109.0 566.6,109.6 566.6,111.1 567.3,112.0 568.1,113.0 568.7,113.6 568.6,114.2 569.2,115.3 570.1,115.6 570.8,115.6 570.4,114.5 570.9,114.0 571.8,114.3 571.2,113.4 570.5,112.5 570.2,111.3 571.2,111.5 571.8,110.9 574.0,110.7 574.2,111.6 574.9,111.1 577.3,110.6 576.3,109.9 576.2,109.5 M591.3,108.9 591.4,110.0 589.6,110.6 587.4,110.6 585.7,110.3 584.0,109.5 581.8,109.5 580.1,110.3 577.5,110.4 577.3,110.6 575.1,111.3 574.2,111.7 574.5,112.5 575.1,113.4 575.4,114.7 576.4,115.4 577.9,115.9 579.1,115.3 580.7,115.9 582.9,115.8 584.6,115.5 585.2,116.2 585.0,116.3 M538.7,100.4 541.1,100.2 543.9,99.8 546.6,99.2 545.6,98.9 546.9,97.6 545.4,97.2 545.0,96.4 543.3,95.0 542.8,93.9 541.7,93.9 542.8,92.0 540.6,92.0 541.7,91.0 539.5,91.0 538.3,92.2 538.9,93.9 539.5,95.0 541.1,95.1 541.7,96.1 541.7,96.8 540.0,96.9 540.3,98.0 539.2,98.6 541.7,99.0 540.0,99.4 538.7,100.4 M538.3,98.1 536.1,98.7 533.9,98.7 534.4,96.9 533.9,95.9 535.8,95.4 536.1,94.8 538.1,94.8 538.9,95.5 538.1,96.9 538.3,98.1 M537.2,92.2 536.9,91.3 M543.6,89.4 543.7,88.6 M558.9,113.9 560.1,113.7 562.3,113.6 561.8,115.4 559.5,114.7 558.9,113.9 M571.3,116.9 572.3,116.7 574.2,117.0 572.5,117.4 571.3,116.9 M573.4,115.0 573.2,114.9 M602.4,77.2 604.1,75.5 607.4,73.8 611.9,71.6 620.8,70.5 618.5,71.8 611.9,73.3 608.5,75.5 608.5,77.5 604.6,77.4 602.4,77.2 M579.3,78.5 581.8,78.9 M619.7,78.8 619.7,77.2 621.3,75.5 623.0,74.7 M650.9,71.6 656.4,71.0 660.9,69.7 664.2,70.7 670.9,71.6 M729.9,89.4 727.7,90.0 726.6,91.6 725.5,91.9 726.6,93.9 725.5,95.0 723.3,97.2 721.6,97.4 719.6,99.4 718.8,97.2 718.2,93.9 719.9,91.9 723.3,89.4 727.2,87.7 727.7,86.6 723.3,87.4 719.9,87.7 717.7,90.0 715.5,90.5 M699.3,104.5 696.5,106.7 693.7,108.4 691.5,108.4 690.6,109.1 689.5,110.0 688.2,111.7 687.1,112.3 688.2,113.4 689.3,115.0 689.1,116.9 687.1,117.6 685.7,117.8 685.9,116.2 686.2,114.5 684.8,114.2 684.3,113.7 684.6,112.3 M680.9,112.8 680.1,113.0 680.9,111.1 679.8,110.7 677.6,112.3 676.1,112.8 677.0,113.9 677.6,114.7 679.8,114.4 681.5,114.8 679.8,115.6 678.1,117.0 679.3,118.9 680.7,120.8 680.7,121.9 679.3,122.5 680.9,123.1 680.4,124.7 678.7,126.7 678.1,127.9 676.5,129.0 674.8,130.6 M647.3,131.4 645.8,131.2 644.2,132.0 643.1,132.1 M650.9,68.3 656.4,67.7 662.0,68.8 656.4,69.4 650.9,68.3 M655.3,67.1 647.5,67.1 M680.4,128.1 680.9,129.0 679.6,131.8 678.8,130.6 679.8,128.4 680.4,128.1 M690.8,118.4 692.1,118.0 693.7,117.9 695.4,117.7 696.2,118.9 697.6,117.7 699.6,117.6 700.8,117.3 702.0,116.5 702.1,113.9 703.2,112.3 702.5,110.1 701.2,110.4 701.0,111.7 700.4,113.4 699.3,114.7 697.6,114.5 697.9,115.3 696.5,116.5 694.3,116.6 692.6,116.8 691.0,117.8 690.8,118.4 M701.3,110.0 702.1,108.9 704.5,109.5 706.9,108.0 705.8,107.2 703.2,105.6 702.8,106.7 702.4,108.1 701.0,108.9 701.3,110.0 M689.8,118.9 691.0,118.6 691.8,119.5 691.3,121.3 690.5,121.6 690.1,120.1 689.5,119.3 689.8,118.9 M692.6,118.5 694.6,118.0 695.1,118.6 693.4,119.2 692.6,119.6 692.6,118.5 M703.2,95.8 704.3,97.2 704.7,100.6 706.0,101.7 704.3,103.9 704.9,105.0 703.2,105.0 703.2,102.8 703.2,100.6 703.0,98.3 703.2,95.8 M685.6,119.2 686.4,118.9 M679.3,135.7 680.9,135.7 681.3,137.9 680.5,139.6 680.9,140.7 683.2,141.8 682.9,142.2 681.5,141.1 679.8,141.0 679.3,140.1 678.7,138.4 679.3,135.7 M680.9,148.5 682.6,146.8 684.8,145.3 685.9,147.3 685.6,149.0 684.8,149.9 683.2,149.0 682.6,147.7 680.9,148.5 M683.5,142.3 684.6,142.6 685.0,144.0 684.0,143.7 683.5,142.3 M680.9,143.1 682.0,143.4 682.4,145.9 681.5,145.3 680.9,144.6 680.9,143.1 M675.6,146.9 678.1,143.8 677.6,144.9 675.6,146.9 M679.3,141.2 680.4,141.6 680.0,142.6 679.3,141.2 M682.5,144.6 683.2,144.0 682.9,145.1 682.5,144.6 M676.1,149.2 677.6,150.5 676.5,151.5 M676.5,153.8 677.6,155.1 676.2,155.4 M662.2,163.8 663.7,162.9 665.9,163.5 668.1,163.9 668.7,163.4 670.6,164.1 672.6,164.8 672.5,165.8 669.8,165.5 666.4,164.8 663.7,164.5 662.2,163.8 M672.7,165.4 673.8,165.4 673.4,166.1 672.7,165.4 M674.2,165.6 675.0,165.7 674.6,166.2 674.2,165.6 M675.1,165.7 677.6,165.5 677.4,166.1 675.4,166.3 675.1,165.7 M678.5,165.7 681.8,165.5 681.5,166.1 678.7,166.1 678.5,165.7 M682.6,167.7 683.7,166.5 686.5,165.6 685.9,166.5 683.2,167.7 682.6,167.7 M677.6,166.8 679.6,167.4 678.5,167.5 677.6,166.8 M678.4,162.5 678.1,160.2 677.4,159.3 678.5,156.5 678.7,155.4 679.8,154.9 682.0,155.3 684.3,154.5 683.7,155.7 682.0,155.8 679.6,155.8 679.0,157.3 680.4,157.3 682.4,157.2 681.8,157.9 680.4,158.4 681.5,159.9 682.0,161.1 681.5,162.2 680.7,161.5 680.4,160.5 679.7,159.4 679.1,160.2 679.1,162.4 678.4,162.5 M687.3,154.0 687.6,155.9 688.2,155.7 688.5,154.6 687.6,154.8 687.3,154.0 M687.6,159.6 689.3,159.5 690.7,160.0 689.3,160.2 687.6,159.6 M685.6,159.8 686.7,160.0 685.9,160.5 685.6,159.8 M694.5,162.7 695.1,163.5 M691.5,164.4 691.7,165.2 M662.8,167.8 662.9,168.0 M691.0,157.2 692.6,156.7 694.3,157.2 695.4,159.9 697.1,158.7 M707.4,162.2 709.0,162.9 709.7,163.8 708.8,164.1 M698.8,162.4 696.0,161.2 693.7,160.5 693.0,160.7 692.1,159.5 694.1,158.8 692.4,158.7 691.0,157.8 691.0,157.2 M710.2,162.6 712.1,162.4 714.3,160.9 714.7,161.8 713.2,162.9 711.6,163.2 710.2,162.6 M713.0,159.3 715.2,161.1 M567.0,67.5 575.0,67.5 M346.0,98.5 352.0,98.0 M356.5,97.0 364.0,95.0 M366.0,131.0 372.5,135.0 M404.5,77.0 413.0,73.0 422.0,69.5 430.0,68.0 436.0,67.0 442.0,65.5 448.0,64.5 M442.0,103.0 446.0,102.0 450.0,103.5 452.0,105.0 M448.5,105.0 448.5,110.0 M452.0,106.0 455.0,107.5 M453.0,110.0 457.0,108.5 M474.5,136.5 476.5,137.5 477.5,140.0 479.0,142.5 M470.0,235.0 472.0,232.0 476.0,230.0 481.0,227.0 478.0,229.0 476.0,232.0 478.0,235.0 479.0,238.0 M472.0,236.0 475.0,233.0 M716.5,162.5 726.0,167.5 M741.5,175.0 745.0,177.0 M728.0,179.0 731.0,181.5 M520.0,64.5 536.0,66.5 M510.0,75.0 514.0,78.0 519.0,79.0"/></g>
<path d="M336,53 L352.5,69.5 M737.3,248.3 L754,265" stroke="#f00" stroke-width="2" fill="none"/><path d="M352.5,53 L336,69.5 M754,248.3 L737.3,265" stroke="#f00" stroke-width="1.4" fill="none"/><!--/MAP-->
</svg>
</body>
</html>
